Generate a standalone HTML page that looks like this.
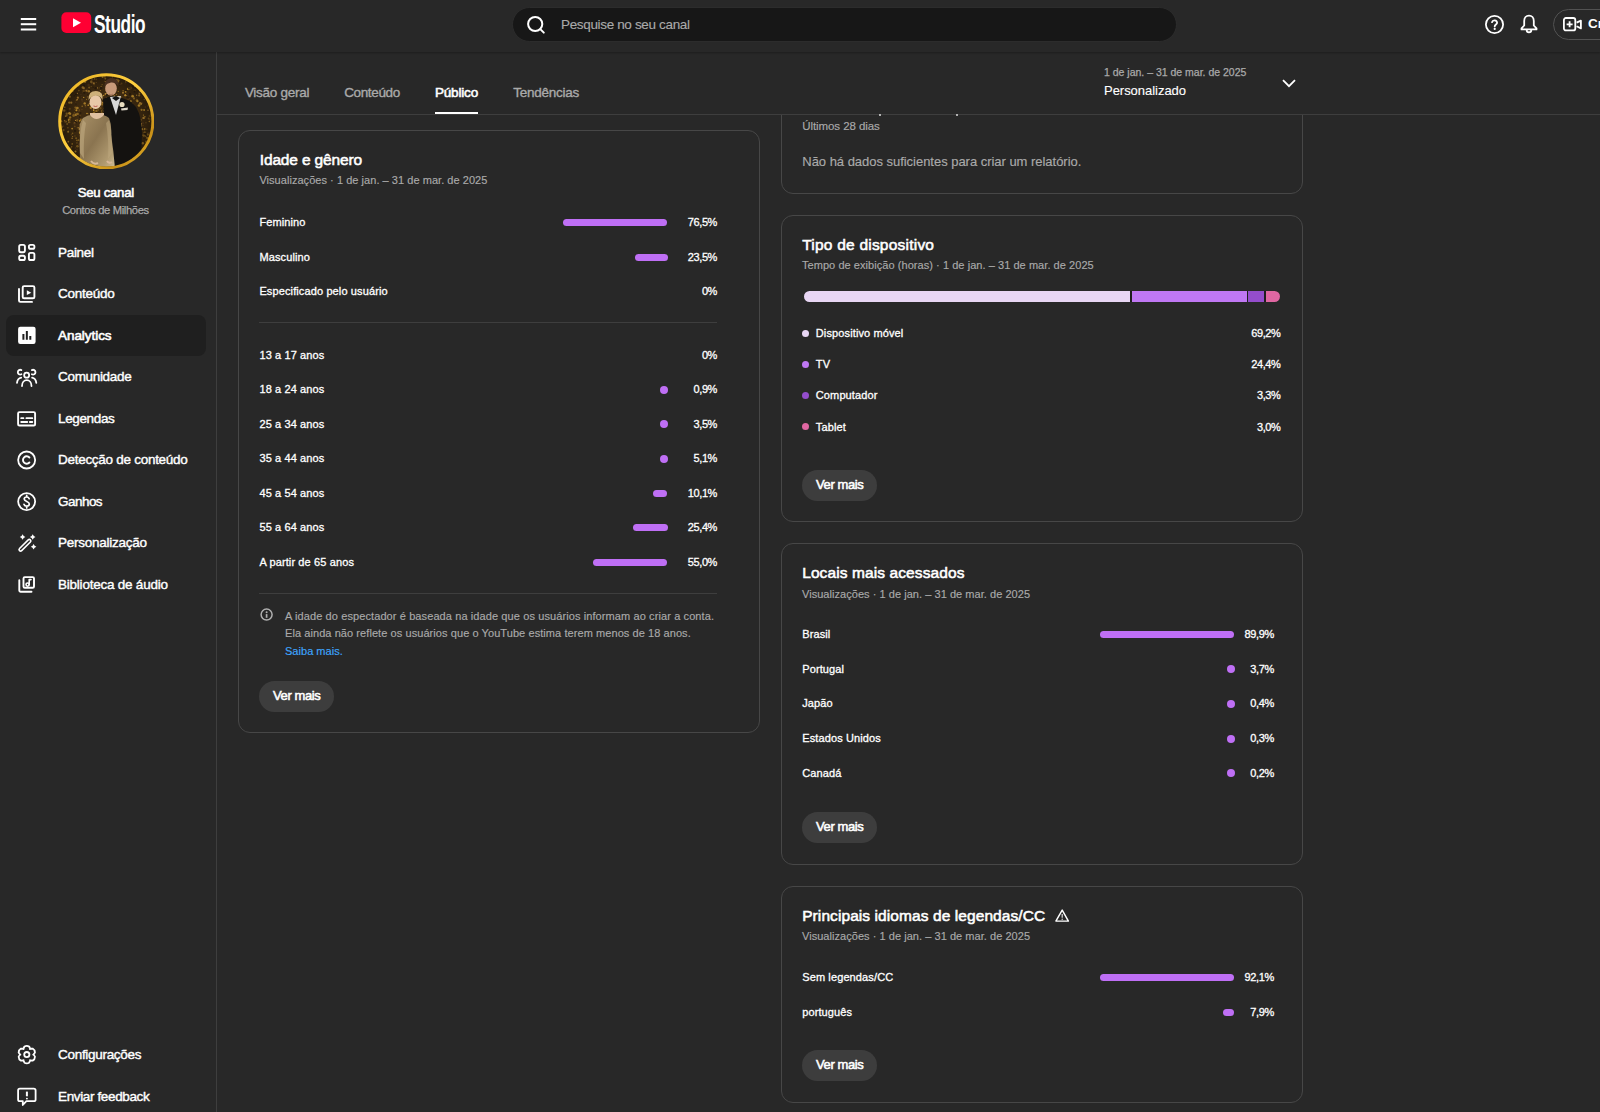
<!DOCTYPE html>
<html><head><meta charset="utf-8"><title>YouTube Studio</title><style>
*{margin:0;padding:0;box-sizing:border-box}
html,body{width:1600px;height:1112px;overflow:hidden;background:#282828;font-family:"Liberation Sans",sans-serif;color:#fff;position:relative}
.t{position:absolute;white-space:nowrap}
.r{position:absolute}
#hdr{position:absolute;left:0;top:0;width:1600px;height:52px;background:#282828;box-shadow:0 1px 2px rgba(0,0,0,.28);z-index:5}
#side{position:absolute;left:0;top:52px;width:217px;height:1060px;border-right:1px solid #3e3e3e;background:#282828}
#tabs{position:absolute;left:217px;top:52px;width:1383px;height:63px;background:#282828;border-bottom:1px solid #3e3e3e;z-index:3}
.card{position:absolute;border:1px solid #474747;border-radius:12px}
</style></head><body>
<div id="hdr"></div>
<svg class="r" style="left:20px;top:17px;z-index:6" width="17" height="14" viewBox="0 0 17 14"><rect x="0.8" y="1" width="15.4" height="2" fill="#fff"/><rect x="0.8" y="6.2" width="15.4" height="2" fill="#fff"/><rect x="0.8" y="11.5" width="15.4" height="2" fill="#fff"/></svg>
<svg class="r" style="left:61px;top:12px;z-index:6" width="31" height="22" viewBox="0 0 31 22"><rect x="0.4" y="0.3" width="29.8" height="20.6" rx="5" fill="#ff0033"/><path d="M12 6.3 L20 10.8 L12 15.3 Z" fill="#fff"/></svg>
<div class="t" style="left:93.5px;top:12px;font-size:25px;line-height:25px;font-weight:bold;transform:scaleX(.69);transform-origin:0 0;letter-spacing:-0.6px;z-index:6">Studio</div>
<div class="r" style="left:511.50px;top:6.50px;width:665.00px;height:35.70px;background:#171717;border-radius:18px;z-index:6;border:1px solid #2c2c2c"></div>
<svg class="r" style="left:525px;top:13.5px;z-index:6" width="22" height="22" viewBox="0 0 22 22"><circle cx="10.2" cy="10" r="7.1" fill="none" stroke="#fff" stroke-width="2"/><path d="M15.3 15.1 L18.8 18.6" stroke="#fff" stroke-width="2" stroke-linecap="round"/></svg>
<div class="t" style="top:17.80px;font-size:13.5px;line-height:13.5px;color:#aaaaaa;letter-spacing:-0.342px;-webkit-text-stroke:0.12px #aaaaaa;left:561.00px;z-index:6">Pesquise no seu canal</div>
<svg class="r" style="left:1484px;top:14px;z-index:6" width="21" height="21" viewBox="0 0 21 21"><circle cx="10.5" cy="10.5" r="8.6" fill="none" stroke="#fff" stroke-width="1.8"/><path d="M8 8.2a2.6 2.6 0 0 1 5.1.5c0 1.7-2.4 2-2.4 3.7" fill="none" stroke="#fff" stroke-width="1.8" stroke-linecap="round"/><circle cx="10.7" cy="14.9" r="1.1" fill="#fff"/></svg>
<svg class="r" style="left:1519px;top:14px;z-index:6" width="20" height="21" viewBox="0 0 20 21"><path d="M10 1.6c-2.9 0-4.8 2.3-4.8 5.3v4.6l-2.7 2.9v1h15v-1l-2.7-2.9V6.9c0-3-1.9-5.3-4.8-5.3z" fill="none" stroke="#fff" stroke-width="1.8" stroke-linejoin="round"/><path d="M7.7 16a2.3 2.3 0 0 0 4.6 0" fill="none" stroke="#fff" stroke-width="1.8"/></svg>
<div class="r" style="left:1553px;top:9px;width:100px;height:31px;border-radius:16px;border:1px solid #525252;z-index:6"></div>
<svg class="r" style="left:1562px;top:15px;z-index:6" width="22" height="18" viewBox="0 0 22 18"><rect x="1.9" y="3" width="11.4" height="12.4" rx="2" fill="none" stroke="#fff" stroke-width="1.8"/><path d="M7.6 6.3v6M4.6 9.3h6" stroke="#fff" stroke-width="1.8"/><path d="M14.6 7.6L18.9 5.6v7.8l-4.3-2.1" fill="none" stroke="#fff" stroke-width="1.8" stroke-linejoin="round"/></svg>
<div class="t" style="top:17.20px;font-size:13.5px;line-height:13.5px;color:#fff;letter-spacing:0.000px;font-weight:bold;left:1588.00px;z-index:6">Criar</div>
<div id="side"></div>
<svg class="r" style="left:58px;top:73px" width="96" height="96" viewBox="0 0 96 96">
<defs>
<linearGradient id="ring" x1="0" y1="0" x2="1" y2="1"><stop offset="0" stop-color="#e8b020"/><stop offset="0.45" stop-color="#ffd040"/><stop offset="0.8" stop-color="#c89018"/><stop offset="1" stop-color="#f0c030"/></linearGradient>
<linearGradient id="dress" x1="0" y1="0" x2="1" y2="1"><stop offset="0" stop-color="#a89066"/><stop offset="0.45" stop-color="#8a7450"/><stop offset="0.8" stop-color="#b09a70"/><stop offset="1" stop-color="#d0c09a"/></linearGradient>
<radialGradient id="vig" cx="50%" cy="50%" r="50%"><stop offset="0.6" stop-color="#000" stop-opacity="0"/><stop offset="1" stop-color="#000" stop-opacity=".4"/></radialGradient>
<clipPath id="cc"><circle cx="48.3" cy="48.3" r="45.5"/></clipPath>
</defs>
<g clip-path="url(#cc)">
<rect x="0" y="0" width="96" height="96" fill="#3e2a10"/>
<circle cx="31.1" cy="14.5" r="1.0" fill="#8a6420"/><circle cx="78.8" cy="9.0" r="1.0" fill="#54381a"/><circle cx="20.6" cy="8.3" r="0.8" fill="#a67a28"/><circle cx="8.7" cy="40.8" r="1.2" fill="#8a6420"/><circle cx="91.0" cy="60.5" r="1.0" fill="#8a6420"/><circle cx="55.4" cy="38.1" r="1.3" fill="#8a6420"/><circle cx="53.4" cy="12.8" r="0.8" fill="#54381a"/><circle cx="11.3" cy="29.6" r="1.2" fill="#a67a28"/><circle cx="9.9" cy="54.8" r="0.7" fill="#8a6420"/><circle cx="52.6" cy="6.0" r="0.5" fill="#a67a28"/><circle cx="47.7" cy="51.0" r="1.1" fill="#c0902c"/><circle cx="56.2" cy="43.5" r="0.7" fill="#b08030"/><circle cx="17.3" cy="74.9" r="0.6" fill="#6a4a18"/><circle cx="50.4" cy="84.0" r="1.1" fill="#6a4a18"/><circle cx="58.5" cy="7.0" r="0.9" fill="#a67a28"/><circle cx="72.7" cy="14.6" r="0.9" fill="#8a6420"/><circle cx="92.4" cy="7.5" r="0.9" fill="#b08030"/><circle cx="84.0" cy="30.1" r="1.1" fill="#54381a"/><circle cx="47.7" cy="76.5" r="0.6" fill="#8a6420"/><circle cx="90.7" cy="45.5" r="1.0" fill="#8a6420"/><circle cx="70.2" cy="29.7" r="1.0" fill="#2a1c0c"/><circle cx="78.9" cy="27.3" r="0.8" fill="#2a1c0c"/><circle cx="33.3" cy="90.3" r="0.8" fill="#54381a"/><circle cx="11.2" cy="5.7" r="1.1" fill="#a67a28"/><circle cx="70.9" cy="38.2" r="1.2" fill="#c0902c"/><circle cx="7.7" cy="43.1" r="0.9" fill="#a67a28"/><circle cx="78.7" cy="82.9" r="0.7" fill="#c0902c"/><circle cx="94.7" cy="65.5" r="0.8" fill="#a67a28"/><circle cx="14.5" cy="16.9" r="0.7" fill="#a67a28"/><circle cx="1.2" cy="79.8" r="0.6" fill="#6a4a18"/><circle cx="0.4" cy="40.2" r="0.8" fill="#54381a"/><circle cx="30.6" cy="12.0" r="1.2" fill="#54381a"/><circle cx="62.9" cy="71.0" r="0.9" fill="#b08030"/><circle cx="74.9" cy="84.0" r="1.1" fill="#c0902c"/><circle cx="38.2" cy="37.8" r="0.9" fill="#c0902c"/><circle cx="6.0" cy="6.5" r="0.7" fill="#a67a28"/><circle cx="10.6" cy="57.7" r="0.6" fill="#54381a"/><circle cx="14.5" cy="9.7" r="0.8" fill="#8a6420"/><circle cx="6.8" cy="20.0" r="0.8" fill="#2a1c0c"/><circle cx="24.2" cy="33.3" r="0.8" fill="#8a6420"/><circle cx="11.1" cy="46.9" r="1.3" fill="#c0902c"/><circle cx="46.4" cy="8.2" r="0.6" fill="#6a4a18"/><circle cx="71.1" cy="45.9" r="1.1" fill="#54381a"/><circle cx="2.2" cy="91.3" r="0.9" fill="#a67a28"/><circle cx="66.2" cy="87.8" r="1.1" fill="#6a4a18"/><circle cx="93.9" cy="82.9" r="1.1" fill="#6a4a18"/><circle cx="49.8" cy="87.2" r="0.8" fill="#a67a28"/><circle cx="51.1" cy="74.8" r="0.8" fill="#a67a28"/><circle cx="58.9" cy="75.7" r="1.1" fill="#a67a28"/><circle cx="77.4" cy="78.6" r="1.1" fill="#a67a28"/><circle cx="19.2" cy="47.3" r="1.1" fill="#8a6420"/><circle cx="75.9" cy="45.3" r="0.7" fill="#54381a"/><circle cx="91.8" cy="42.9" r="1.2" fill="#6a4a18"/><circle cx="91.7" cy="35.0" r="0.7" fill="#a67a28"/><circle cx="45.1" cy="32.4" r="0.9" fill="#54381a"/><circle cx="80.7" cy="46.0" r="1.0" fill="#b08030"/><circle cx="61.7" cy="80.1" r="0.6" fill="#c0902c"/><circle cx="75.1" cy="72.0" r="0.9" fill="#a67a28"/><circle cx="41.7" cy="61.0" r="0.6" fill="#2a1c0c"/><circle cx="38.0" cy="38.5" r="1.3" fill="#2a1c0c"/><circle cx="15.3" cy="95.3" r="0.5" fill="#54381a"/><circle cx="86.9" cy="77.4" r="0.6" fill="#b08030"/><circle cx="57.2" cy="45.5" r="1.2" fill="#a67a28"/><circle cx="52.7" cy="12.6" r="0.5" fill="#2a1c0c"/><circle cx="62.4" cy="50.6" r="1.2" fill="#c0902c"/><circle cx="94.7" cy="18.7" r="1.2" fill="#8a6420"/><circle cx="24.2" cy="28.1" r="0.7" fill="#54381a"/><circle cx="31.3" cy="52.3" r="1.2" fill="#8a6420"/><circle cx="87.4" cy="34.0" r="0.9" fill="#54381a"/><circle cx="78.2" cy="49.6" r="1.2" fill="#54381a"/><circle cx="12.6" cy="14.6" r="0.9" fill="#b08030"/><circle cx="42.3" cy="17.6" r="0.5" fill="#b08030"/><circle cx="14.4" cy="13.6" r="1.0" fill="#8a6420"/><circle cx="53.4" cy="31.3" r="0.9" fill="#54381a"/><circle cx="46.3" cy="74.5" r="1.2" fill="#8a6420"/><circle cx="23.9" cy="26.6" r="1.1" fill="#54381a"/><circle cx="43.4" cy="2.7" r="1.2" fill="#8a6420"/><circle cx="42.6" cy="58.8" r="0.9" fill="#54381a"/><circle cx="19.1" cy="26.6" r="0.9" fill="#b08030"/><circle cx="45.9" cy="90.4" r="1.1" fill="#6a4a18"/><circle cx="88.6" cy="85.7" r="0.7" fill="#c0902c"/><circle cx="13.2" cy="11.7" r="0.9" fill="#8a6420"/><circle cx="64.4" cy="41.1" r="0.7" fill="#6a4a18"/><circle cx="75.3" cy="86.1" r="0.6" fill="#2a1c0c"/><circle cx="61.8" cy="35.2" r="0.7" fill="#a67a28"/><circle cx="92.9" cy="21.1" r="1.3" fill="#c0902c"/><circle cx="85.0" cy="15.6" r="1.0" fill="#a67a28"/><circle cx="15.5" cy="41.4" r="0.9" fill="#6a4a18"/><circle cx="40.4" cy="34.2" r="0.6" fill="#6a4a18"/><circle cx="1.9" cy="53.2" r="0.9" fill="#8a6420"/><circle cx="36.9" cy="49.7" r="0.7" fill="#8a6420"/><circle cx="10.8" cy="88.2" r="0.7" fill="#8a6420"/><circle cx="8.1" cy="26.1" r="1.2" fill="#a67a28"/><circle cx="26.0" cy="12.4" r="0.8" fill="#2a1c0c"/><circle cx="78.6" cy="24.8" r="0.6" fill="#54381a"/><circle cx="54.8" cy="67.2" r="0.6" fill="#8a6420"/><circle cx="76.8" cy="17.6" r="1.2" fill="#6a4a18"/><circle cx="90.1" cy="60.9" r="1.1" fill="#8a6420"/><circle cx="58.4" cy="21.4" r="0.7" fill="#8a6420"/><circle cx="43.6" cy="32.6" r="0.9" fill="#6a4a18"/><circle cx="59.7" cy="4.1" r="1.1" fill="#8a6420"/><circle cx="93.0" cy="25.1" r="0.6" fill="#6a4a18"/><circle cx="60.4" cy="51.0" r="0.7" fill="#c0902c"/><circle cx="48.0" cy="17.1" r="0.8" fill="#8a6420"/><circle cx="95.5" cy="3.5" r="0.5" fill="#54381a"/><circle cx="52.9" cy="18.2" r="0.9" fill="#c0902c"/><circle cx="10.2" cy="78.6" r="0.8" fill="#c0902c"/><circle cx="52.4" cy="85.3" r="1.3" fill="#6a4a18"/><circle cx="66.0" cy="94.3" r="0.8" fill="#b08030"/><circle cx="84.7" cy="70.0" r="0.6" fill="#6a4a18"/><circle cx="94.3" cy="80.4" r="0.5" fill="#2a1c0c"/><circle cx="71.1" cy="24.5" r="0.6" fill="#8a6420"/><circle cx="63.9" cy="36.6" r="0.9" fill="#6a4a18"/><circle cx="57.5" cy="66.5" r="0.5" fill="#a67a28"/><circle cx="15.1" cy="42.8" r="0.7" fill="#6a4a18"/><circle cx="93.4" cy="52.5" r="0.7" fill="#6a4a18"/><circle cx="20.9" cy="17.6" r="0.8" fill="#8a6420"/><circle cx="45.6" cy="48.3" r="0.7" fill="#54381a"/><circle cx="74.5" cy="8.7" r="1.2" fill="#a67a28"/><circle cx="38.4" cy="4.0" r="0.5" fill="#6a4a18"/><circle cx="60.4" cy="8.1" r="1.3" fill="#b08030"/><circle cx="72.1" cy="63.1" r="1.1" fill="#54381a"/><circle cx="37.4" cy="31.3" r="1.3" fill="#a67a28"/><circle cx="27.3" cy="59.4" r="0.6" fill="#b08030"/><circle cx="80.2" cy="85.6" r="1.0" fill="#2a1c0c"/><circle cx="67.3" cy="48.5" r="1.2" fill="#b08030"/><circle cx="48.4" cy="80.2" r="1.1" fill="#b08030"/><circle cx="65.9" cy="76.6" r="1.1" fill="#2a1c0c"/><circle cx="61.7" cy="8.2" r="0.5" fill="#2a1c0c"/><circle cx="34.6" cy="10.1" r="1.2" fill="#54381a"/><circle cx="4.9" cy="1.8" r="0.9" fill="#a67a28"/><circle cx="47.0" cy="0.3" r="1.1" fill="#2a1c0c"/><circle cx="89.5" cy="86.2" r="0.6" fill="#54381a"/><circle cx="6.3" cy="70.7" r="0.7" fill="#8a6420"/><circle cx="81.2" cy="22.5" r="1.1" fill="#a67a28"/><circle cx="71.0" cy="93.7" r="0.9" fill="#c0902c"/><circle cx="7.4" cy="87.4" r="0.7" fill="#8a6420"/><circle cx="59.2" cy="61.7" r="0.6" fill="#a67a28"/><circle cx="31.9" cy="62.5" r="1.1" fill="#54381a"/><circle cx="54.5" cy="1.2" r="0.5" fill="#6a4a18"/><circle cx="93.4" cy="9.6" r="0.7" fill="#c0902c"/><circle cx="27.9" cy="49.6" r="0.9" fill="#c0902c"/><circle cx="73.6" cy="95.4" r="0.9" fill="#6a4a18"/><circle cx="93.9" cy="89.9" r="0.5" fill="#c0902c"/><circle cx="7.3" cy="48.6" r="1.3" fill="#6a4a18"/><circle cx="37.1" cy="88.0" r="1.2" fill="#8a6420"/><circle cx="55.8" cy="13.6" r="0.9" fill="#6a4a18"/><circle cx="12.7" cy="78.7" r="0.9" fill="#8a6420"/><circle cx="67.5" cy="22.2" r="1.2" fill="#c0902c"/><circle cx="37.8" cy="15.3" r="1.3" fill="#2a1c0c"/><circle cx="43.3" cy="29.0" r="0.6" fill="#6a4a18"/><circle cx="36.1" cy="11.6" r="0.8" fill="#6a4a18"/><circle cx="72.1" cy="80.6" r="0.6" fill="#a67a28"/><circle cx="68.5" cy="86.6" r="0.7" fill="#6a4a18"/><circle cx="6.2" cy="37.5" r="1.2" fill="#8a6420"/><circle cx="34.6" cy="41.1" r="0.7" fill="#8a6420"/><circle cx="26.9" cy="5.0" r="1.0" fill="#2a1c0c"/><circle cx="89.8" cy="23.9" r="0.7" fill="#54381a"/><circle cx="30.3" cy="74.2" r="1.1" fill="#c0902c"/><circle cx="84.9" cy="77.9" r="1.0" fill="#54381a"/><circle cx="52.7" cy="69.1" r="0.5" fill="#2a1c0c"/><circle cx="39.4" cy="59.0" r="0.6" fill="#b08030"/><circle cx="27.5" cy="4.7" r="1.2" fill="#a67a28"/><circle cx="16.4" cy="39.8" r="0.7" fill="#6a4a18"/><circle cx="70.9" cy="93.7" r="0.7" fill="#2a1c0c"/><circle cx="22.9" cy="46.4" r="1.0" fill="#8a6420"/><circle cx="16.1" cy="15.5" r="0.7" fill="#b08030"/><circle cx="47.7" cy="21.1" r="1.2" fill="#b08030"/><circle cx="43.2" cy="13.4" r="0.7" fill="#8a6420"/><circle cx="16.8" cy="53.4" r="0.8" fill="#6a4a18"/><circle cx="24.8" cy="54.7" r="1.2" fill="#2a1c0c"/><circle cx="83.6" cy="36.8" r="1.1" fill="#a67a28"/><circle cx="36.2" cy="32.5" r="0.5" fill="#6a4a18"/><circle cx="55.1" cy="34.6" r="1.0" fill="#54381a"/><circle cx="60.4" cy="82.8" r="0.7" fill="#6a4a18"/><circle cx="86.1" cy="36.9" r="1.0" fill="#c0902c"/><circle cx="91.6" cy="81.5" r="1.2" fill="#8a6420"/><circle cx="12.2" cy="40.8" r="1.1" fill="#b08030"/><circle cx="45.4" cy="56.4" r="0.5" fill="#c0902c"/><circle cx="89.3" cy="89.1" r="0.9" fill="#c0902c"/><circle cx="93.3" cy="23.9" r="0.6" fill="#a67a28"/><circle cx="14.6" cy="93.3" r="0.6" fill="#b08030"/><circle cx="69.3" cy="62.1" r="1.1" fill="#c0902c"/><circle cx="8.2" cy="74.6" r="0.5" fill="#a67a28"/><circle cx="22.3" cy="88.3" r="1.0" fill="#6a4a18"/><circle cx="92.4" cy="60.1" r="0.9" fill="#c0902c"/><circle cx="67.1" cy="10.8" r="0.6" fill="#54381a"/><circle cx="90.6" cy="18.4" r="0.7" fill="#b08030"/><circle cx="57.7" cy="1.0" r="0.7" fill="#c0902c"/><circle cx="26.7" cy="30.4" r="1.2" fill="#a67a28"/><circle cx="45.6" cy="22.5" r="0.7" fill="#c0902c"/><circle cx="67.6" cy="29.5" r="0.5" fill="#c0902c"/><circle cx="84.9" cy="62.1" r="0.6" fill="#a67a28"/><circle cx="64.1" cy="88.8" r="0.7" fill="#8a6420"/><circle cx="66.8" cy="69.0" r="0.8" fill="#c0902c"/><circle cx="19.0" cy="76.5" r="1.1" fill="#54381a"/><circle cx="6.5" cy="47.6" r="0.7" fill="#b08030"/><circle cx="78.7" cy="22.2" r="0.7" fill="#b08030"/><circle cx="85.4" cy="10.5" r="1.0" fill="#54381a"/><circle cx="18.0" cy="21.4" r="0.8" fill="#2a1c0c"/><circle cx="5.4" cy="57.1" r="1.2" fill="#8a6420"/><circle cx="20.4" cy="93.5" r="0.6" fill="#8a6420"/><circle cx="68.1" cy="17.7" r="0.9" fill="#2a1c0c"/><circle cx="84.8" cy="70.3" r="1.3" fill="#a67a28"/><circle cx="31.6" cy="17.8" r="1.2" fill="#2a1c0c"/><circle cx="44.9" cy="29.9" r="1.1" fill="#b08030"/><circle cx="35.9" cy="31.8" r="0.6" fill="#8a6420"/><circle cx="7.5" cy="7.8" r="0.8" fill="#8a6420"/><circle cx="53.9" cy="72.8" r="0.8" fill="#b08030"/><circle cx="78.9" cy="78.9" r="0.8" fill="#8a6420"/><circle cx="67.7" cy="18.8" r="0.9" fill="#c0902c"/><circle cx="18.5" cy="35.0" r="1.2" fill="#8a6420"/><circle cx="60.6" cy="23.8" r="1.0" fill="#c0902c"/><circle cx="3.9" cy="3.3" r="0.6" fill="#8a6420"/><circle cx="24.7" cy="71.7" r="1.2" fill="#6a4a18"/><circle cx="34.8" cy="32.2" r="1.3" fill="#8a6420"/><circle cx="25.2" cy="68.8" r="0.8" fill="#6a4a18"/><circle cx="28.6" cy="69.3" r="1.0" fill="#b08030"/><circle cx="60.9" cy="90.6" r="0.5" fill="#a67a28"/><circle cx="10.3" cy="68.7" r="0.9" fill="#b08030"/><circle cx="37.1" cy="24.1" r="0.8" fill="#c0902c"/><circle cx="12.7" cy="47.7" r="0.5" fill="#2a1c0c"/><circle cx="29.1" cy="66.4" r="0.6" fill="#a67a28"/><circle cx="31.5" cy="30.7" r="0.8" fill="#b08030"/><circle cx="57.2" cy="49.1" r="0.8" fill="#a67a28"/><circle cx="23.7" cy="6.2" r="0.5" fill="#54381a"/><circle cx="52.3" cy="15.4" r="0.8" fill="#8a6420"/><circle cx="94.8" cy="25.4" r="0.6" fill="#8a6420"/><circle cx="40.4" cy="94.9" r="1.3" fill="#a67a28"/><circle cx="22.5" cy="40.0" r="1.0" fill="#2a1c0c"/><circle cx="22.6" cy="51.7" r="1.1" fill="#b08030"/><circle cx="11.6" cy="80.7" r="0.7" fill="#54381a"/><circle cx="25.7" cy="24.4" r="0.7" fill="#c0902c"/><circle cx="23.8" cy="23.6" r="0.6" fill="#54381a"/><circle cx="18.1" cy="6.2" r="0.7" fill="#a67a28"/><circle cx="48.7" cy="22.2" r="1.1" fill="#2a1c0c"/><circle cx="44.5" cy="3.6" r="0.5" fill="#b08030"/><circle cx="22.2" cy="43.0" r="0.8" fill="#6a4a18"/><circle cx="22.4" cy="4.8" r="1.0" fill="#b08030"/><circle cx="56.0" cy="89.3" r="0.8" fill="#b08030"/><circle cx="17.1" cy="57.9" r="1.1" fill="#2a1c0c"/><circle cx="90.8" cy="10.2" r="1.0" fill="#54381a"/><circle cx="33.6" cy="3.6" r="0.8" fill="#8a6420"/><circle cx="19.6" cy="24.5" r="1.0" fill="#2a1c0c"/><circle cx="87.7" cy="78.2" r="1.2" fill="#c0902c"/><circle cx="65.1" cy="17.8" r="0.7" fill="#a67a28"/><circle cx="3.0" cy="47.6" r="0.9" fill="#c0902c"/><circle cx="9.7" cy="37.9" r="0.9" fill="#2a1c0c"/><circle cx="51.3" cy="62.7" r="0.8" fill="#6a4a18"/><circle cx="39.3" cy="27.2" r="0.7" fill="#8a6420"/><circle cx="30.0" cy="54.4" r="0.8" fill="#c0902c"/><circle cx="1.7" cy="73.6" r="1.1" fill="#2a1c0c"/><circle cx="18.9" cy="69.9" r="0.7" fill="#8a6420"/><circle cx="41.7" cy="15.0" r="0.6" fill="#8a6420"/><circle cx="39.0" cy="84.8" r="0.9" fill="#a67a28"/><circle cx="12.5" cy="5.0" r="0.6" fill="#b08030"/><circle cx="87.3" cy="8.5" r="1.0" fill="#6a4a18"/><circle cx="70.8" cy="16.5" r="0.8" fill="#a67a28"/><circle cx="50.0" cy="88.8" r="0.6" fill="#c0902c"/><circle cx="72.3" cy="76.0" r="1.1" fill="#6a4a18"/><circle cx="12.2" cy="90.5" r="1.3" fill="#c0902c"/><circle cx="30.2" cy="58.3" r="1.0" fill="#8a6420"/><circle cx="86.8" cy="59.6" r="1.2" fill="#a67a28"/><circle cx="61.5" cy="82.2" r="1.0" fill="#54381a"/><circle cx="81.2" cy="79.6" r="0.6" fill="#a67a28"/><circle cx="4.0" cy="90.1" r="0.6" fill="#6a4a18"/><circle cx="11.8" cy="23.7" r="1.1" fill="#a67a28"/><circle cx="3.9" cy="54.0" r="1.1" fill="#8a6420"/><circle cx="64.1" cy="31.1" r="0.8" fill="#c0902c"/><circle cx="52.8" cy="60.2" r="0.7" fill="#c0902c"/><circle cx="29.6" cy="23.9" r="0.8" fill="#6a4a18"/><circle cx="42.9" cy="42.1" r="0.5" fill="#54381a"/><circle cx="94.7" cy="44.7" r="0.9" fill="#54381a"/><circle cx="74.9" cy="44.0" r="0.6" fill="#c0902c"/><circle cx="38.4" cy="6.4" r="0.8" fill="#6a4a18"/><circle cx="8.8" cy="42.4" r="0.9" fill="#8a6420"/><circle cx="3.9" cy="12.5" r="1.2" fill="#6a4a18"/><circle cx="74.7" cy="49.1" r="0.5" fill="#54381a"/><circle cx="85.9" cy="62.7" r="1.1" fill="#8a6420"/><circle cx="82.3" cy="95.6" r="1.1" fill="#b08030"/><circle cx="10.5" cy="12.6" r="1.2" fill="#6a4a18"/><circle cx="91.8" cy="87.9" r="0.6" fill="#b08030"/><circle cx="69.2" cy="21.2" r="1.2" fill="#54381a"/><circle cx="72.6" cy="15.2" r="1.2" fill="#6a4a18"/><circle cx="86.9" cy="43.8" r="0.7" fill="#c0902c"/><circle cx="20.0" cy="25.2" r="0.9" fill="#6a4a18"/><circle cx="35.7" cy="19.1" r="0.8" fill="#2a1c0c"/><circle cx="89.9" cy="65.2" r="1.2" fill="#a67a28"/><circle cx="76.0" cy="25.4" r="1.1" fill="#8a6420"/><circle cx="61.1" cy="34.5" r="1.2" fill="#54381a"/><circle cx="50.1" cy="66.1" r="1.2" fill="#6a4a18"/><circle cx="95.3" cy="60.5" r="0.8" fill="#b08030"/><circle cx="35.7" cy="36.1" r="0.8" fill="#a67a28"/><circle cx="34.6" cy="73.4" r="0.9" fill="#a67a28"/><circle cx="59.1" cy="92.0" r="0.7" fill="#54381a"/><circle cx="24.4" cy="61.4" r="1.3" fill="#54381a"/><circle cx="89.1" cy="86.0" r="1.1" fill="#2a1c0c"/><circle cx="3.2" cy="14.3" r="1.0" fill="#c0902c"/><circle cx="40.1" cy="35.0" r="0.5" fill="#c0902c"/><circle cx="21.8" cy="62.7" r="0.5" fill="#8a6420"/><circle cx="54.4" cy="29.2" r="0.9" fill="#54381a"/><circle cx="21.5" cy="56.0" r="1.0" fill="#a67a28"/><circle cx="35.2" cy="79.5" r="0.6" fill="#8a6420"/><circle cx="89.9" cy="23.4" r="0.6" fill="#8a6420"/><circle cx="6.1" cy="13.9" r="1.0" fill="#6a4a18"/><circle cx="38.6" cy="25.4" r="0.5" fill="#2a1c0c"/><circle cx="78.8" cy="85.7" r="1.0" fill="#54381a"/><circle cx="42.6" cy="90.0" r="1.1" fill="#a67a28"/><circle cx="15.8" cy="0.0" r="0.5" fill="#8a6420"/><circle cx="39.0" cy="22.8" r="0.5" fill="#b08030"/><circle cx="10.1" cy="58.8" r="1.0" fill="#a67a28"/><circle cx="13.7" cy="19.2" r="1.0" fill="#54381a"/><circle cx="62.2" cy="39.9" r="1.0" fill="#54381a"/><circle cx="29.7" cy="28.8" r="0.5" fill="#2a1c0c"/><circle cx="75.2" cy="68.7" r="0.5" fill="#b08030"/><circle cx="41.9" cy="87.6" r="0.6" fill="#2a1c0c"/><circle cx="43.4" cy="21.7" r="0.6" fill="#a67a28"/><circle cx="61.8" cy="11.8" r="1.2" fill="#2a1c0c"/><circle cx="90.5" cy="25.3" r="0.5" fill="#2a1c0c"/><circle cx="53.2" cy="41.9" r="1.1" fill="#54381a"/><circle cx="93.3" cy="28.4" r="1.2" fill="#a67a28"/><circle cx="8.2" cy="48.7" r="0.6" fill="#a67a28"/><circle cx="80.8" cy="19.5" r="0.6" fill="#6a4a18"/><circle cx="18.4" cy="37.3" r="1.0" fill="#c0902c"/><circle cx="87.1" cy="60.5" r="1.1" fill="#2a1c0c"/><circle cx="80.8" cy="51.5" r="0.9" fill="#54381a"/><circle cx="67.0" cy="82.3" r="0.8" fill="#2a1c0c"/><circle cx="22.4" cy="84.9" r="1.1" fill="#c0902c"/><circle cx="59.8" cy="7.5" r="1.2" fill="#a67a28"/><circle cx="3.2" cy="10.7" r="1.0" fill="#a67a28"/><circle cx="33.1" cy="13.6" r="0.5" fill="#8a6420"/><circle cx="13.3" cy="61.8" r="0.5" fill="#8a6420"/><circle cx="70.7" cy="6.3" r="1.0" fill="#6a4a18"/><circle cx="19.1" cy="91.6" r="0.9" fill="#2a1c0c"/><circle cx="6.3" cy="83.3" r="1.2" fill="#c0902c"/><circle cx="10.3" cy="19.7" r="0.6" fill="#8a6420"/><circle cx="91.1" cy="87.5" r="1.1" fill="#8a6420"/><circle cx="79.2" cy="60.6" r="0.7" fill="#8a6420"/><circle cx="12.7" cy="76.0" r="1.0" fill="#6a4a18"/><circle cx="30.6" cy="40.7" r="0.5" fill="#6a4a18"/><circle cx="89.3" cy="4.6" r="1.1" fill="#6a4a18"/><circle cx="73.8" cy="57.8" r="0.9" fill="#6a4a18"/><circle cx="59.4" cy="3.0" r="0.8" fill="#c0902c"/><circle cx="49.8" cy="9.4" r="0.9" fill="#8a6420"/><circle cx="51.6" cy="20.8" r="1.2" fill="#8a6420"/><circle cx="55.2" cy="27.6" r="0.8" fill="#54381a"/><circle cx="19.4" cy="73.2" r="1.3" fill="#8a6420"/><circle cx="33.4" cy="9.2" r="1.1" fill="#b08030"/><circle cx="17.7" cy="47.5" r="0.8" fill="#b08030"/><circle cx="49.5" cy="55.5" r="0.6" fill="#b08030"/><circle cx="20.6" cy="67.1" r="0.9" fill="#8a6420"/><circle cx="90.1" cy="73.6" r="0.9" fill="#2a1c0c"/><circle cx="53.9" cy="10.0" r="0.8" fill="#8a6420"/><circle cx="38.5" cy="37.9" r="1.2" fill="#8a6420"/><circle cx="40.5" cy="62.0" r="0.8" fill="#6a4a18"/><circle cx="25.3" cy="86.5" r="0.9" fill="#c0902c"/><circle cx="94.3" cy="60.6" r="1.3" fill="#a67a28"/><circle cx="51.0" cy="72.4" r="1.1" fill="#2a1c0c"/><circle cx="3.3" cy="55.8" r="0.9" fill="#b08030"/><circle cx="80.9" cy="63.6" r="1.1" fill="#a67a28"/><circle cx="44.5" cy="66.1" r="0.7" fill="#a67a28"/><circle cx="12.1" cy="44.4" r="1.2" fill="#a67a28"/><circle cx="48.7" cy="25.7" r="1.1" fill="#b08030"/><circle cx="81.0" cy="14.8" r="0.6" fill="#a67a28"/><circle cx="69.4" cy="57.9" r="0.8" fill="#a67a28"/><circle cx="31.5" cy="18.2" r="1.3" fill="#2a1c0c"/><circle cx="95.5" cy="15.8" r="1.0" fill="#a67a28"/><circle cx="36.9" cy="94.4" r="1.1" fill="#2a1c0c"/><circle cx="28.6" cy="26.3" r="0.6" fill="#8a6420"/><circle cx="27.0" cy="85.0" r="0.9" fill="#8a6420"/><circle cx="38.3" cy="75.9" r="1.1" fill="#54381a"/><circle cx="94.2" cy="28.4" r="0.5" fill="#6a4a18"/><circle cx="58.0" cy="38.9" r="1.1" fill="#b08030"/><circle cx="41.3" cy="55.1" r="1.1" fill="#c0902c"/><circle cx="81.2" cy="64.1" r="1.0" fill="#b08030"/><circle cx="61.6" cy="56.0" r="0.7" fill="#a67a28"/><circle cx="61.6" cy="43.6" r="0.8" fill="#2a1c0c"/><circle cx="67.3" cy="85.9" r="0.7" fill="#c0902c"/><circle cx="68.5" cy="60.4" r="0.7" fill="#c0902c"/><circle cx="46.3" cy="1.9" r="1.2" fill="#54381a"/><circle cx="64.8" cy="89.3" r="0.6" fill="#2a1c0c"/><circle cx="31.5" cy="1.0" r="1.2" fill="#8a6420"/><circle cx="3.7" cy="52.2" r="0.6" fill="#b08030"/><circle cx="91.3" cy="19.2" r="0.8" fill="#b08030"/><circle cx="55.2" cy="51.9" r="1.1" fill="#54381a"/><circle cx="1.5" cy="76.1" r="0.8" fill="#6a4a18"/><circle cx="39.4" cy="91.0" r="0.7" fill="#2a1c0c"/><circle cx="17.6" cy="49.3" r="1.2" fill="#2a1c0c"/><circle cx="94.5" cy="34.1" r="0.5" fill="#6a4a18"/><circle cx="36.7" cy="5.9" r="0.6" fill="#c0902c"/><circle cx="60.3" cy="64.8" r="1.0" fill="#8a6420"/><circle cx="21.5" cy="71.2" r="1.3" fill="#54381a"/><circle cx="93.3" cy="95.4" r="1.3" fill="#c0902c"/><circle cx="20.4" cy="12.4" r="1.1" fill="#b08030"/><circle cx="76.6" cy="18.5" r="1.0" fill="#2a1c0c"/><circle cx="21.7" cy="92.5" r="0.8" fill="#2a1c0c"/><circle cx="79.7" cy="76.3" r="0.8" fill="#6a4a18"/><circle cx="72.9" cy="62.4" r="1.1" fill="#c0902c"/><circle cx="34.1" cy="81.7" r="0.7" fill="#c0902c"/><circle cx="66.0" cy="94.4" r="1.0" fill="#c0902c"/><circle cx="0.3" cy="69.3" r="0.7" fill="#a67a28"/><circle cx="62.8" cy="30.8" r="0.9" fill="#54381a"/><circle cx="61.2" cy="63.3" r="0.8" fill="#6a4a18"/><circle cx="82.0" cy="5.5" r="1.2" fill="#6a4a18"/><circle cx="75.3" cy="13.5" r="1.2" fill="#2a1c0c"/><circle cx="55.9" cy="63.1" r="0.7" fill="#8a6420"/><circle cx="63.0" cy="24.0" r="0.6" fill="#a67a28"/><circle cx="82.0" cy="17.8" r="0.9" fill="#b08030"/><circle cx="14.7" cy="86.8" r="1.1" fill="#a67a28"/><circle cx="58.5" cy="66.1" r="1.3" fill="#8a6420"/><circle cx="64.2" cy="85.8" r="1.1" fill="#b08030"/><circle cx="28.5" cy="47.5" r="0.7" fill="#8a6420"/><circle cx="71.2" cy="42.1" r="1.2" fill="#54381a"/><circle cx="11.4" cy="40.2" r="1.2" fill="#c0902c"/><circle cx="47.3" cy="5.6" r="0.9" fill="#a67a28"/><circle cx="67.2" cy="23.7" r="0.6" fill="#54381a"/><circle cx="82.8" cy="0.6" r="1.2" fill="#c0902c"/><circle cx="66.8" cy="47.8" r="0.7" fill="#c0902c"/><circle cx="36.0" cy="40.2" r="1.3" fill="#8a6420"/><circle cx="17.3" cy="34.6" r="1.0" fill="#8a6420"/><circle cx="58.5" cy="65.5" r="1.2" fill="#6a4a18"/><circle cx="77.6" cy="9.0" r="0.9" fill="#b08030"/><circle cx="86.2" cy="3.3" r="1.1" fill="#2a1c0c"/><circle cx="12.2" cy="9.1" r="1.0" fill="#6a4a18"/><circle cx="45.6" cy="50.5" r="1.1" fill="#a67a28"/><circle cx="27.3" cy="32.8" r="0.7" fill="#8a6420"/><circle cx="79.4" cy="28.1" r="1.2" fill="#c0902c"/><circle cx="32.0" cy="94.5" r="1.2" fill="#6a4a18"/><circle cx="93.6" cy="62.8" r="1.1" fill="#6a4a18"/><circle cx="18.5" cy="68.5" r="0.6" fill="#2a1c0c"/><circle cx="8.4" cy="95.7" r="0.8" fill="#54381a"/><circle cx="85.0" cy="52.4" r="0.5" fill="#6a4a18"/><circle cx="10.4" cy="4.5" r="1.2" fill="#c0902c"/><circle cx="58.4" cy="63.2" r="1.1" fill="#54381a"/><circle cx="58.7" cy="59.2" r="1.0" fill="#2a1c0c"/><circle cx="66.2" cy="84.1" r="0.6" fill="#8a6420"/><circle cx="64.0" cy="44.0" r="1.1" fill="#8a6420"/><circle cx="63.7" cy="83.4" r="0.8" fill="#8a6420"/><circle cx="87.8" cy="62.9" r="0.8" fill="#b08030"/><circle cx="13.3" cy="29.7" r="1.1" fill="#b08030"/><circle cx="29.0" cy="40.5" r="0.8" fill="#c0902c"/><circle cx="54.4" cy="55.5" r="1.2" fill="#c0902c"/><circle cx="54.5" cy="3.8" r="0.6" fill="#b08030"/><circle cx="40.4" cy="66.8" r="0.8" fill="#8a6420"/><circle cx="1.4" cy="37.2" r="1.0" fill="#2a1c0c"/><circle cx="94.2" cy="45.6" r="0.8" fill="#8a6420"/><circle cx="8.0" cy="45.3" r="1.2" fill="#2a1c0c"/><circle cx="1.5" cy="0.5" r="1.0" fill="#8a6420"/><circle cx="94.7" cy="82.4" r="0.7" fill="#8a6420"/><circle cx="12.4" cy="1.7" r="1.1" fill="#a67a28"/><circle cx="43.3" cy="71.4" r="1.2" fill="#6a4a18"/><circle cx="74.3" cy="68.5" r="1.2" fill="#2a1c0c"/><circle cx="72.9" cy="28.1" r="0.9" fill="#c0902c"/><circle cx="44.2" cy="89.5" r="0.7" fill="#8a6420"/><circle cx="68.9" cy="1.1" r="0.5" fill="#2a1c0c"/><circle cx="65.9" cy="59.3" r="0.8" fill="#6a4a18"/><circle cx="70.0" cy="15.9" r="1.2" fill="#c0902c"/><circle cx="58.5" cy="30.4" r="1.3" fill="#2a1c0c"/><circle cx="42.1" cy="65.0" r="0.6" fill="#b08030"/><circle cx="11.2" cy="91.6" r="0.6" fill="#b08030"/><circle cx="40.1" cy="37.0" r="1.1" fill="#6a4a18"/><circle cx="75.3" cy="54.4" r="0.7" fill="#8a6420"/><circle cx="59.7" cy="62.5" r="1.1" fill="#54381a"/><circle cx="31.9" cy="58.2" r="1.3" fill="#b08030"/><circle cx="14.5" cy="79.9" r="1.0" fill="#a67a28"/><circle cx="36.2" cy="65.7" r="1.0" fill="#a67a28"/><circle cx="77.5" cy="27.2" r="0.5" fill="#6a4a18"/><circle cx="25.7" cy="15.1" r="1.2" fill="#b08030"/><circle cx="85.2" cy="4.1" r="1.2" fill="#b08030"/><circle cx="85.5" cy="95.3" r="0.6" fill="#b08030"/><circle cx="76.5" cy="52.6" r="1.1" fill="#c0902c"/><circle cx="33.3" cy="8.2" r="0.9" fill="#b08030"/><circle cx="36.6" cy="75.6" r="1.1" fill="#a67a28"/><circle cx="29.7" cy="5.5" r="0.8" fill="#2a1c0c"/><circle cx="19.8" cy="24.5" r="1.1" fill="#b08030"/><circle cx="37.0" cy="51.9" r="0.9" fill="#6a4a18"/><circle cx="74.1" cy="22.4" r="1.0" fill="#6a4a18"/><circle cx="85.0" cy="50.1" r="0.9" fill="#54381a"/><circle cx="19.4" cy="20.4" r="0.6" fill="#b08030"/><circle cx="67.3" cy="34.8" r="1.0" fill="#c0902c"/><circle cx="74.8" cy="82.3" r="0.7" fill="#c0902c"/><circle cx="35.9" cy="10.2" r="1.0" fill="#b08030"/><circle cx="7.8" cy="30.3" r="0.5" fill="#6a4a18"/><circle cx="49.9" cy="2.0" r="0.5" fill="#b08030"/><circle cx="83.1" cy="46.7" r="1.0" fill="#6a4a18"/><circle cx="88.8" cy="26.9" r="0.6" fill="#c0902c"/><circle cx="73.7" cy="78.6" r="1.3" fill="#6a4a18"/><circle cx="81.0" cy="32.5" r="1.3" fill="#c0902c"/><circle cx="8.0" cy="4.9" r="0.9" fill="#b08030"/><circle cx="67.7" cy="46.7" r="1.2" fill="#8a6420"/><circle cx="82.8" cy="61.4" r="1.2" fill="#2a1c0c"/><circle cx="92.1" cy="24.7" r="1.0" fill="#2a1c0c"/><circle cx="8.6" cy="88.4" r="0.9" fill="#a67a28"/><circle cx="43.0" cy="15.3" r="1.3" fill="#2a1c0c"/><circle cx="21.3" cy="3.7" r="0.7" fill="#6a4a18"/><circle cx="5.7" cy="53.1" r="0.5" fill="#8a6420"/><circle cx="24.8" cy="49.3" r="1.1" fill="#b08030"/><circle cx="94.6" cy="5.4" r="0.6" fill="#b08030"/><circle cx="0.6" cy="19.1" r="1.1" fill="#54381a"/><circle cx="56.8" cy="72.8" r="0.6" fill="#6a4a18"/><circle cx="35.7" cy="37.4" r="0.8" fill="#c0902c"/><circle cx="16.2" cy="22.9" r="0.6" fill="#2a1c0c"/><circle cx="85.6" cy="44.9" r="1.2" fill="#b08030"/><circle cx="3.5" cy="89.1" r="0.7" fill="#54381a"/><circle cx="83.2" cy="85.3" r="0.6" fill="#c0902c"/><circle cx="92.0" cy="88.9" r="0.8" fill="#8a6420"/><circle cx="60.3" cy="43.4" r="0.8" fill="#b08030"/><circle cx="22.5" cy="11.1" r="0.8" fill="#6a4a18"/><circle cx="21.3" cy="5.4" r="1.1" fill="#54381a"/><circle cx="85.4" cy="42.1" r="0.6" fill="#c0902c"/><circle cx="39.5" cy="14.9" r="0.7" fill="#b08030"/><circle cx="28.5" cy="77.2" r="0.7" fill="#8a6420"/><circle cx="30.5" cy="86.7" r="0.6" fill="#54381a"/><circle cx="5.5" cy="85.9" r="1.0" fill="#a67a28"/><circle cx="53.8" cy="80.2" r="0.6" fill="#b08030"/><circle cx="19.4" cy="35.0" r="1.3" fill="#a67a28"/><circle cx="88.8" cy="9.4" r="0.7" fill="#a67a28"/><circle cx="5.5" cy="69.7" r="0.7" fill="#2a1c0c"/><circle cx="1.5" cy="77.5" r="0.8" fill="#a67a28"/><circle cx="42.5" cy="75.8" r="1.3" fill="#6a4a18"/><circle cx="17.8" cy="41.8" r="1.2" fill="#a67a28"/><circle cx="26.6" cy="17.3" r="1.2" fill="#54381a"/><circle cx="74.0" cy="68.3" r="0.7" fill="#8a6420"/><circle cx="79.6" cy="85.4" r="1.1" fill="#b08030"/><circle cx="26.3" cy="19.8" r="1.0" fill="#2a1c0c"/><circle cx="60.3" cy="18.4" r="0.7" fill="#8a6420"/><circle cx="6.3" cy="70.3" r="0.8" fill="#2a1c0c"/><circle cx="88.0" cy="49.8" r="0.8" fill="#6a4a18"/><circle cx="80.8" cy="83.0" r="0.9" fill="#8a6420"/><circle cx="39.3" cy="73.2" r="0.6" fill="#2a1c0c"/><circle cx="25.6" cy="17.9" r="1.2" fill="#6a4a18"/><circle cx="3.5" cy="67.4" r="1.0" fill="#b08030"/><circle cx="0.4" cy="49.9" r="0.9" fill="#54381a"/><circle cx="6.8" cy="34.2" r="0.7" fill="#b08030"/><circle cx="83.1" cy="30.8" r="1.1" fill="#c0902c"/><circle cx="55.3" cy="86.2" r="0.7" fill="#8a6420"/><circle cx="91.6" cy="47.5" r="0.9" fill="#54381a"/><circle cx="77.2" cy="12.9" r="0.7" fill="#8a6420"/><circle cx="21.5" cy="17.5" r="0.6" fill="#6a4a18"/><circle cx="53.3" cy="91.7" r="0.5" fill="#2a1c0c"/><circle cx="70.9" cy="25.1" r="1.2" fill="#2a1c0c"/><circle cx="55.3" cy="50.2" r="1.1" fill="#8a6420"/><circle cx="33.7" cy="9.0" r="0.6" fill="#6a4a18"/><circle cx="11.8" cy="47.4" r="0.9" fill="#6a4a18"/><circle cx="10.6" cy="11.7" r="1.2" fill="#54381a"/><circle cx="56.8" cy="82.7" r="0.6" fill="#54381a"/><circle cx="44.4" cy="38.1" r="1.3" fill="#8a6420"/><circle cx="90.0" cy="37.3" r="0.8" fill="#b08030"/><circle cx="57.9" cy="3.5" r="1.3" fill="#8a6420"/><circle cx="74.6" cy="32.5" r="0.7" fill="#6a4a18"/><circle cx="68.7" cy="80.9" r="1.0" fill="#6a4a18"/><circle cx="78.2" cy="81.4" r="0.5" fill="#54381a"/><circle cx="14.1" cy="65.3" r="0.8" fill="#b08030"/><circle cx="40.5" cy="60.7" r="0.8" fill="#54381a"/><circle cx="18.0" cy="31.1" r="0.7" fill="#2a1c0c"/><circle cx="2.0" cy="13.4" r="1.3" fill="#b08030"/><circle cx="95.8" cy="43.6" r="0.5" fill="#8a6420"/><circle cx="3.3" cy="61.6" r="0.7" fill="#2a1c0c"/><circle cx="59.9" cy="60.3" r="1.1" fill="#8a6420"/><circle cx="59.6" cy="24.1" r="0.9" fill="#c0902c"/><circle cx="22.7" cy="3.8" r="0.6" fill="#6a4a18"/><circle cx="62.2" cy="11.6" r="1.0" fill="#54381a"/><circle cx="86.5" cy="8.1" r="1.0" fill="#a67a28"/><circle cx="42.2" cy="49.1" r="1.2" fill="#c0902c"/><circle cx="55.4" cy="26.3" r="1.1" fill="#2a1c0c"/><circle cx="52.4" cy="80.6" r="1.0" fill="#54381a"/><circle cx="21.3" cy="37.1" r="0.9" fill="#6a4a18"/><circle cx="44.2" cy="52.6" r="1.0" fill="#c0902c"/><circle cx="78.6" cy="3.0" r="0.8" fill="#a67a28"/><circle cx="49.2" cy="36.8" r="1.0" fill="#8a6420"/><circle cx="88.7" cy="15.6" r="1.3" fill="#6a4a18"/><circle cx="53.4" cy="47.2" r="0.7" fill="#a67a28"/><circle cx="28.4" cy="74.1" r="0.6" fill="#8a6420"/><circle cx="58.2" cy="33.4" r="1.0" fill="#54381a"/><circle cx="37.2" cy="42.2" r="1.1" fill="#8a6420"/><circle cx="50.0" cy="95.0" r="1.0" fill="#a67a28"/><circle cx="40.0" cy="64.2" r="0.6" fill="#a67a28"/><circle cx="59.2" cy="81.6" r="1.2" fill="#54381a"/><circle cx="9.1" cy="82.2" r="1.2" fill="#c0902c"/><circle cx="25.8" cy="60.5" r="1.0" fill="#2a1c0c"/><circle cx="12.2" cy="83.6" r="0.5" fill="#b08030"/><circle cx="52.8" cy="11.3" r="0.8" fill="#54381a"/><circle cx="14.4" cy="81.6" r="0.7" fill="#54381a"/><circle cx="58.3" cy="36.4" r="0.9" fill="#c0902c"/><circle cx="27.7" cy="33.9" r="0.8" fill="#54381a"/><circle cx="53.3" cy="36.9" r="0.8" fill="#b08030"/><circle cx="71.6" cy="95.0" r="0.8" fill="#6a4a18"/><circle cx="17.7" cy="29.2" r="0.6" fill="#54381a"/><circle cx="36.2" cy="22.3" r="1.2" fill="#6a4a18"/><circle cx="31.1" cy="81.0" r="1.2" fill="#6a4a18"/><circle cx="19.6" cy="40.9" r="1.2" fill="#8a6420"/><circle cx="2.5" cy="24.6" r="1.2" fill="#6a4a18"/><circle cx="88.3" cy="74.3" r="0.9" fill="#c0902c"/><circle cx="49.7" cy="49.7" r="1.0" fill="#c0902c"/><circle cx="44.6" cy="3.9" r="1.0" fill="#c0902c"/><circle cx="91.0" cy="64.9" r="0.9" fill="#8a6420"/><circle cx="39.3" cy="48.1" r="1.0" fill="#54381a"/><circle cx="14.8" cy="18.1" r="0.8" fill="#c0902c"/><circle cx="42.3" cy="60.0" r="1.3" fill="#6a4a18"/><circle cx="66.4" cy="71.7" r="0.6" fill="#6a4a18"/><circle cx="30.5" cy="93.9" r="1.2" fill="#54381a"/><circle cx="16.9" cy="63.0" r="0.7" fill="#6a4a18"/><circle cx="78.8" cy="95.1" r="1.2" fill="#c0902c"/><circle cx="60.6" cy="50.3" r="1.2" fill="#a67a28"/><circle cx="48.5" cy="18.1" r="0.6" fill="#2a1c0c"/><circle cx="54.2" cy="10.2" r="1.0" fill="#2a1c0c"/><circle cx="61.1" cy="4.1" r="0.8" fill="#b08030"/><circle cx="0.3" cy="68.2" r="0.9" fill="#6a4a18"/><circle cx="38.2" cy="9.5" r="0.5" fill="#8a6420"/><circle cx="18.9" cy="47.8" r="0.9" fill="#6a4a18"/><circle cx="83.6" cy="86.0" r="0.9" fill="#a67a28"/><circle cx="55.1" cy="39.5" r="0.6" fill="#a67a28"/><circle cx="49.8" cy="48.9" r="0.5" fill="#8a6420"/><circle cx="16.4" cy="50.2" r="1.2" fill="#54381a"/><circle cx="41.3" cy="76.8" r="1.0" fill="#2a1c0c"/><circle cx="74.0" cy="31.0" r="1.1" fill="#6a4a18"/><circle cx="26.4" cy="3.2" r="1.0" fill="#b08030"/><circle cx="86.8" cy="55.9" r="0.8" fill="#c0902c"/><circle cx="59.9" cy="1.9" r="0.7" fill="#c0902c"/><circle cx="55.9" cy="92.1" r="0.9" fill="#54381a"/><circle cx="22.9" cy="21.4" r="0.6" fill="#54381a"/><circle cx="82.1" cy="30.2" r="1.2" fill="#b08030"/><circle cx="43.7" cy="40.2" r="0.7" fill="#c0902c"/><circle cx="94.0" cy="6.5" r="1.0" fill="#2a1c0c"/><circle cx="69.0" cy="21.3" r="0.7" fill="#2a1c0c"/><circle cx="46.5" cy="76.1" r="0.7" fill="#a67a28"/><circle cx="16.3" cy="36.4" r="0.5" fill="#6a4a18"/><circle cx="38.0" cy="34.8" r="0.8" fill="#b08030"/><circle cx="37.0" cy="38.7" r="0.6" fill="#8a6420"/><circle cx="40.5" cy="87.6" r="0.9" fill="#c0902c"/><circle cx="18.4" cy="27.2" r="0.7" fill="#8a6420"/><circle cx="26.8" cy="2.4" r="1.1" fill="#a67a28"/><circle cx="67.8" cy="8.9" r="0.7" fill="#b08030"/><circle cx="75.6" cy="53.3" r="0.9" fill="#b08030"/><circle cx="77.3" cy="15.3" r="0.8" fill="#2a1c0c"/><circle cx="38.9" cy="60.4" r="1.0" fill="#6a4a18"/><circle cx="91.3" cy="48.5" r="0.7" fill="#c0902c"/><circle cx="64.8" cy="90.4" r="1.3" fill="#54381a"/><circle cx="86.4" cy="56.4" r="0.8" fill="#a67a28"/><circle cx="38.8" cy="49.0" r="0.6" fill="#b08030"/><circle cx="11.8" cy="49.3" r="0.9" fill="#6a4a18"/><circle cx="70.7" cy="73.4" r="0.5" fill="#2a1c0c"/><circle cx="54.5" cy="29.8" r="0.8" fill="#8a6420"/><circle cx="66.7" cy="74.5" r="0.7" fill="#a67a28"/><circle cx="63.6" cy="10.5" r="0.9" fill="#6a4a18"/><circle cx="77.3" cy="72.8" r="0.7" fill="#2a1c0c"/><circle cx="29.9" cy="21.7" r="0.6" fill="#2a1c0c"/><circle cx="38.3" cy="34.2" r="1.2" fill="#c0902c"/><circle cx="74.4" cy="84.7" r="1.2" fill="#a67a28"/><circle cx="89.9" cy="16.9" r="0.8" fill="#b08030"/><circle cx="63.7" cy="33.7" r="0.8" fill="#2a1c0c"/><circle cx="67.6" cy="44.4" r="1.3" fill="#c0902c"/><circle cx="33.8" cy="60.4" r="0.6" fill="#8a6420"/><circle cx="26.0" cy="58.5" r="0.7" fill="#2a1c0c"/><circle cx="3.9" cy="3.8" r="0.6" fill="#a67a28"/><circle cx="72.7" cy="15.0" r="1.1" fill="#54381a"/><circle cx="29.8" cy="61.3" r="0.6" fill="#b08030"/><circle cx="21.9" cy="47.8" r="0.9" fill="#c0902c"/><circle cx="64.3" cy="55.2" r="1.2" fill="#8a6420"/><circle cx="80.1" cy="74.5" r="0.7" fill="#8a6420"/><circle cx="84.0" cy="56.2" r="1.1" fill="#a67a28"/><circle cx="65.4" cy="3.6" r="0.8" fill="#b08030"/><circle cx="87.8" cy="72.0" r="0.6" fill="#2a1c0c"/><circle cx="71.4" cy="95.8" r="1.0" fill="#a67a28"/><circle cx="27.0" cy="8.6" r="1.3" fill="#c0902c"/><circle cx="42.5" cy="32.7" r="0.9" fill="#2a1c0c"/><circle cx="79.7" cy="60.3" r="0.9" fill="#8a6420"/><circle cx="65.0" cy="19.8" r="1.0" fill="#b08030"/><circle cx="89.1" cy="12.3" r="1.1" fill="#8a6420"/><circle cx="91.4" cy="79.2" r="0.9" fill="#a67a28"/><circle cx="52.5" cy="93.1" r="1.0" fill="#54381a"/><circle cx="25.0" cy="92.5" r="0.6" fill="#6a4a18"/><circle cx="39.5" cy="19.3" r="0.7" fill="#a67a28"/><circle cx="65.9" cy="46.7" r="0.9" fill="#2a1c0c"/><circle cx="23.2" cy="49.5" r="0.9" fill="#2a1c0c"/><circle cx="33.7" cy="28.7" r="1.2" fill="#a67a28"/><circle cx="56.4" cy="23.1" r="1.0" fill="#8a6420"/><circle cx="52.6" cy="73.0" r="0.6" fill="#2a1c0c"/><circle cx="14.9" cy="94.0" r="1.2" fill="#c0902c"/><circle cx="79.8" cy="11.0" r="0.7" fill="#6a4a18"/><circle cx="46.7" cy="4.2" r="1.2" fill="#6a4a18"/><circle cx="18.9" cy="67.4" r="0.9" fill="#8a6420"/><circle cx="15.5" cy="42.7" r="1.0" fill="#6a4a18"/><circle cx="16.1" cy="6.9" r="0.5" fill="#b08030"/><circle cx="46.6" cy="71.7" r="0.8" fill="#2a1c0c"/><circle cx="54.1" cy="10.4" r="0.9" fill="#c0902c"/><circle cx="46.9" cy="75.3" r="0.8" fill="#6a4a18"/><circle cx="88.3" cy="61.9" r="1.0" fill="#2a1c0c"/><circle cx="62.6" cy="24.1" r="0.7" fill="#a67a28"/><circle cx="71.8" cy="2.4" r="0.8" fill="#a67a28"/><circle cx="28.4" cy="17.8" r="1.0" fill="#b08030"/><circle cx="86.0" cy="65.5" r="0.6" fill="#2a1c0c"/><circle cx="79.7" cy="71.3" r="0.8" fill="#a67a28"/><circle cx="62.1" cy="34.2" r="0.7" fill="#a67a28"/><circle cx="52.9" cy="35.5" r="1.2" fill="#a67a28"/><circle cx="5.5" cy="10.3" r="1.1" fill="#b08030"/><circle cx="96.0" cy="38.7" r="0.5" fill="#a67a28"/><circle cx="47.5" cy="48.0" r="0.6" fill="#6a4a18"/><circle cx="57.9" cy="60.1" r="0.6" fill="#a67a28"/><circle cx="15.7" cy="42.5" r="1.3" fill="#8a6420"/><circle cx="94.0" cy="81.7" r="0.9" fill="#a67a28"/><circle cx="69.4" cy="0.3" r="1.2" fill="#b08030"/><circle cx="80.0" cy="49.1" r="0.6" fill="#8a6420"/><circle cx="63.5" cy="49.4" r="0.8" fill="#6a4a18"/><circle cx="6.0" cy="0.8" r="1.3" fill="#a67a28"/><circle cx="86.8" cy="15.8" r="0.7" fill="#c0902c"/><circle cx="77.2" cy="64.8" r="1.0" fill="#c0902c"/><circle cx="8.2" cy="31.1" r="0.9" fill="#54381a"/><circle cx="87.2" cy="83.1" r="1.3" fill="#54381a"/><circle cx="59.5" cy="77.9" r="0.5" fill="#2a1c0c"/><circle cx="31.8" cy="63.2" r="1.0" fill="#c0902c"/><circle cx="91.5" cy="46.2" r="1.0" fill="#6a4a18"/><circle cx="83.1" cy="50.9" r="1.0" fill="#b08030"/><circle cx="18.1" cy="65.2" r="0.9" fill="#8a6420"/><circle cx="14.1" cy="55.6" r="0.9" fill="#c0902c"/><circle cx="34.6" cy="23.1" r="0.9" fill="#6a4a18"/><circle cx="11.0" cy="17.3" r="1.2" fill="#54381a"/><circle cx="72.0" cy="21.2" r="1.2" fill="#2a1c0c"/><circle cx="9.1" cy="51.0" r="0.7" fill="#c0902c"/><circle cx="21.8" cy="44.0" r="0.9" fill="#2a1c0c"/><circle cx="10.8" cy="49.3" r="1.0" fill="#8a6420"/><circle cx="81.7" cy="65.2" r="1.1" fill="#a67a28"/><circle cx="82.9" cy="52.9" r="1.1" fill="#b08030"/><circle cx="91.0" cy="60.2" r="1.3" fill="#54381a"/><circle cx="9.8" cy="79.7" r="0.8" fill="#a67a28"/><circle cx="92.9" cy="18.4" r="0.9" fill="#8a6420"/><circle cx="13.1" cy="74.5" r="0.5" fill="#a67a28"/><circle cx="4.5" cy="4.0" r="1.1" fill="#a67a28"/><circle cx="44.1" cy="11.6" r="0.6" fill="#8a6420"/><circle cx="59.6" cy="83.7" r="1.0" fill="#2a1c0c"/><circle cx="83.6" cy="16.1" r="1.1" fill="#6a4a18"/><circle cx="77.2" cy="70.7" r="0.5" fill="#6a4a18"/><circle cx="11.8" cy="35.8" r="1.1" fill="#6a4a18"/><circle cx="69.3" cy="4.2" r="1.0" fill="#8a6420"/><circle cx="34.2" cy="31.4" r="1.0" fill="#8a6420"/><circle cx="88.8" cy="64.8" r="0.7" fill="#a67a28"/><circle cx="66.6" cy="2.0" r="1.3" fill="#c0902c"/><circle cx="10.9" cy="2.0" r="0.6" fill="#b08030"/><circle cx="24.8" cy="14.4" r="1.2" fill="#b08030"/><circle cx="66.0" cy="36.6" r="0.6" fill="#6a4a18"/><circle cx="51.7" cy="66.2" r="1.1" fill="#c0902c"/><circle cx="1.3" cy="32.9" r="0.6" fill="#54381a"/><circle cx="46.5" cy="3.0" r="1.2" fill="#8a6420"/><circle cx="17.5" cy="78.6" r="1.0" fill="#c0902c"/><circle cx="80.9" cy="92.9" r="1.1" fill="#c0902c"/><circle cx="37.8" cy="83.8" r="1.0" fill="#8a6420"/><circle cx="34.6" cy="50.7" r="0.7" fill="#a67a28"/><circle cx="56.6" cy="4.2" r="0.6" fill="#6a4a18"/><circle cx="69.8" cy="31.8" r="0.9" fill="#6a4a18"/><circle cx="30.2" cy="32.2" r="0.9" fill="#a67a28"/><circle cx="2.0" cy="44.1" r="1.3" fill="#8a6420"/><circle cx="60.6" cy="69.8" r="0.6" fill="#c0902c"/><circle cx="26.2" cy="48.0" r="0.7" fill="#54381a"/><circle cx="55.1" cy="56.1" r="0.6" fill="#2a1c0c"/><circle cx="3.3" cy="53.8" r="1.1" fill="#b08030"/><circle cx="19.1" cy="40.9" r="1.0" fill="#8a6420"/><circle cx="34.8" cy="27.0" r="1.1" fill="#b08030"/><circle cx="76.5" cy="13.5" r="0.6" fill="#b08030"/><circle cx="32.8" cy="34.8" r="1.2" fill="#a67a28"/><circle cx="33.6" cy="52.9" r="0.8" fill="#8a6420"/><circle cx="67.6" cy="64.5" r="1.2" fill="#b08030"/><circle cx="46.2" cy="35.3" r="0.7" fill="#a67a28"/><circle cx="95.7" cy="14.5" r="0.7" fill="#b08030"/><circle cx="64.5" cy="38.9" r="0.8" fill="#b08030"/><circle cx="29.0" cy="16.2" r="0.6" fill="#6a4a18"/><circle cx="69.1" cy="24.2" r="1.0" fill="#2a1c0c"/><circle cx="90.0" cy="32.7" r="1.2" fill="#54381a"/><circle cx="88.8" cy="56.2" r="0.7" fill="#6a4a18"/><circle cx="94.8" cy="34.3" r="1.1" fill="#c0902c"/><circle cx="69.2" cy="88.5" r="1.2" fill="#6a4a18"/><circle cx="86.3" cy="26.5" r="0.7" fill="#8a6420"/><circle cx="72.8" cy="60.1" r="0.7" fill="#8a6420"/><circle cx="21.0" cy="38.4" r="0.7" fill="#54381a"/><circle cx="27.1" cy="48.2" r="0.6" fill="#a67a28"/><circle cx="70.5" cy="92.5" r="1.0" fill="#8a6420"/><circle cx="7.1" cy="78.4" r="1.0" fill="#2a1c0c"/><circle cx="13.1" cy="18.1" r="0.9" fill="#8a6420"/><circle cx="61.4" cy="88.6" r="0.7" fill="#6a4a18"/><circle cx="83.3" cy="2.6" r="0.9" fill="#54381a"/><circle cx="65.2" cy="32.4" r="0.5" fill="#c0902c"/><circle cx="76.4" cy="8.4" r="1.0" fill="#b08030"/><circle cx="47.5" cy="57.4" r="0.7" fill="#c0902c"/><circle cx="83.8" cy="2.5" r="0.8" fill="#2a1c0c"/><circle cx="94.8" cy="5.4" r="1.0" fill="#2a1c0c"/><circle cx="80.2" cy="15.0" r="0.5" fill="#a67a28"/><circle cx="13.7" cy="73.7" r="0.6" fill="#b08030"/><circle cx="34.7" cy="33.0" r="1.0" fill="#b08030"/><circle cx="53.3" cy="63.1" r="1.0" fill="#6a4a18"/><circle cx="22.1" cy="59.4" r="1.2" fill="#c0902c"/><circle cx="73.3" cy="74.5" r="0.7" fill="#b08030"/><circle cx="52.8" cy="67.8" r="0.9" fill="#6a4a18"/><circle cx="50.2" cy="90.3" r="0.6" fill="#8a6420"/><circle cx="53.6" cy="9.6" r="1.1" fill="#6a4a18"/><circle cx="14.5" cy="60.4" r="0.8" fill="#8a6420"/><circle cx="89.9" cy="60.0" r="0.6" fill="#54381a"/><circle cx="48.2" cy="53.3" r="0.6" fill="#54381a"/><circle cx="35.1" cy="14.3" r="0.6" fill="#2a1c0c"/><circle cx="82.1" cy="74.8" r="0.9" fill="#6a4a18"/><circle cx="74.7" cy="23.3" r="1.3" fill="#c0902c"/><circle cx="20.5" cy="87.6" r="1.2" fill="#c0902c"/><circle cx="44.2" cy="31.1" r="1.2" fill="#8a6420"/><circle cx="63.4" cy="1.5" r="1.1" fill="#c0902c"/><circle cx="64.7" cy="33.7" r="0.7" fill="#c0902c"/><circle cx="39.4" cy="88.2" r="1.3" fill="#2a1c0c"/><circle cx="82.6" cy="2.9" r="0.5" fill="#2a1c0c"/><circle cx="41.6" cy="22.2" r="0.7" fill="#b08030"/><circle cx="40.9" cy="26.8" r="1.2" fill="#c0902c"/><circle cx="20.8" cy="54.7" r="0.6" fill="#b08030"/><circle cx="89.7" cy="73.8" r="1.3" fill="#a67a28"/><circle cx="79.0" cy="27.1" r="0.8" fill="#c0902c"/><circle cx="83.7" cy="24.0" r="0.8" fill="#54381a"/><circle cx="57.4" cy="43.5" r="1.0" fill="#b08030"/><circle cx="20.1" cy="84.8" r="0.8" fill="#b08030"/><circle cx="74.3" cy="42.2" r="0.8" fill="#a67a28"/><circle cx="95.5" cy="28.6" r="0.5" fill="#8a6420"/><circle cx="14.6" cy="87.6" r="0.6" fill="#6a4a18"/><circle cx="14.5" cy="70.7" r="0.6" fill="#a67a28"/><circle cx="44.6" cy="38.1" r="0.8" fill="#2a1c0c"/><circle cx="88.2" cy="68.8" r="1.2" fill="#8a6420"/><circle cx="56.2" cy="19.3" r="1.0" fill="#8a6420"/><circle cx="3.6" cy="48.5" r="0.7" fill="#c0902c"/><circle cx="67.0" cy="69.9" r="0.5" fill="#6a4a18"/><circle cx="6.2" cy="10.6" r="1.3" fill="#a67a28"/><circle cx="50.4" cy="0.2" r="0.7" fill="#54381a"/><circle cx="14.2" cy="70.9" r="0.9" fill="#8a6420"/><circle cx="50.9" cy="80.6" r="1.3" fill="#8a6420"/><circle cx="33.5" cy="20.7" r="1.3" fill="#a67a28"/><circle cx="70.2" cy="26.2" r="0.6" fill="#6a4a18"/><circle cx="25.8" cy="92.8" r="0.7" fill="#8a6420"/><circle cx="39.2" cy="53.4" r="0.8" fill="#8a6420"/><circle cx="31.3" cy="4.0" r="0.9" fill="#6a4a18"/><circle cx="52.7" cy="66.3" r="1.3" fill="#b08030"/><circle cx="71.5" cy="25.8" r="0.8" fill="#54381a"/><circle cx="40.2" cy="93.4" r="0.8" fill="#c0902c"/><circle cx="84.6" cy="77.2" r="1.2" fill="#2a1c0c"/><circle cx="0.5" cy="58.4" r="1.2" fill="#6a4a18"/><circle cx="66.6" cy="70.1" r="1.3" fill="#b08030"/><circle cx="19.0" cy="11.2" r="1.2" fill="#b08030"/><circle cx="3.2" cy="68.8" r="0.8" fill="#54381a"/><circle cx="31.1" cy="62.0" r="0.9" fill="#6a4a18"/><circle cx="43.7" cy="55.5" r="0.9" fill="#2a1c0c"/><circle cx="81.9" cy="49.0" r="1.0" fill="#c0902c"/><circle cx="22.5" cy="60.4" r="1.1" fill="#c0902c"/><circle cx="34.1" cy="6.2" r="1.3" fill="#6a4a18"/><circle cx="58.8" cy="65.0" r="0.8" fill="#2a1c0c"/><circle cx="76.5" cy="63.8" r="1.2" fill="#b08030"/><circle cx="25.4" cy="87.2" r="0.9" fill="#2a1c0c"/><circle cx="33.4" cy="56.6" r="1.0" fill="#a67a28"/><circle cx="6.3" cy="72.7" r="0.8" fill="#a67a28"/><circle cx="50.6" cy="78.1" r="0.7" fill="#a67a28"/><circle cx="14.6" cy="63.5" r="0.6" fill="#b08030"/><circle cx="82.2" cy="62.6" r="1.2" fill="#6a4a18"/><circle cx="36.6" cy="79.9" r="1.2" fill="#8a6420"/><circle cx="39.4" cy="67.5" r="0.8" fill="#6a4a18"/><circle cx="34.2" cy="77.1" r="0.9" fill="#c0902c"/><circle cx="63.6" cy="26.4" r="0.7" fill="#c0902c"/><circle cx="66.7" cy="43.1" r="0.9" fill="#b08030"/><circle cx="16.8" cy="49.7" r="0.5" fill="#a67a28"/><circle cx="35.2" cy="50.0" r="0.7" fill="#6a4a18"/><circle cx="50.2" cy="76.9" r="0.7" fill="#54381a"/><circle cx="19.3" cy="54.8" r="0.5" fill="#a67a28"/><circle cx="29.4" cy="52.3" r="1.2" fill="#6a4a18"/><circle cx="23.2" cy="80.1" r="0.6" fill="#2a1c0c"/><circle cx="47.4" cy="8.5" r="0.6" fill="#b08030"/><circle cx="27.9" cy="75.0" r="1.2" fill="#2a1c0c"/><circle cx="42.5" cy="35.2" r="1.1" fill="#6a4a18"/><circle cx="93.1" cy="41.4" r="1.0" fill="#6a4a18"/><circle cx="33.8" cy="37.0" r="1.0" fill="#54381a"/><circle cx="18.4" cy="93.3" r="1.1" fill="#6a4a18"/><circle cx="6.1" cy="19.5" r="1.2" fill="#8a6420"/><circle cx="72.6" cy="36.4" r="0.9" fill="#c0902c"/><circle cx="89.8" cy="61.7" r="1.1" fill="#8a6420"/><circle cx="56.9" cy="44.4" r="0.9" fill="#b08030"/><circle cx="41.9" cy="95.5" r="0.6" fill="#8a6420"/><circle cx="42.2" cy="47.2" r="0.9" fill="#b08030"/><circle cx="0.9" cy="22.3" r="0.7" fill="#54381a"/><circle cx="3.9" cy="65.3" r="0.9" fill="#b08030"/><circle cx="37.2" cy="44.1" r="0.6" fill="#b08030"/><circle cx="7.4" cy="78.5" r="0.6" fill="#8a6420"/><circle cx="81.4" cy="20.7" r="0.9" fill="#b08030"/><circle cx="65.4" cy="68.3" r="0.9" fill="#8a6420"/><circle cx="52.8" cy="71.8" r="1.2" fill="#a67a28"/><circle cx="95.8" cy="78.4" r="1.2" fill="#a67a28"/><circle cx="30.8" cy="18.3" r="1.3" fill="#a67a28"/><circle cx="94.9" cy="26.4" r="0.7" fill="#6a4a18"/><circle cx="36.8" cy="63.7" r="0.7" fill="#c0902c"/><circle cx="49.1" cy="40.3" r="0.5" fill="#6a4a18"/><circle cx="23.9" cy="36.5" r="0.8" fill="#54381a"/><circle cx="24.7" cy="19.4" r="0.5" fill="#54381a"/><circle cx="62.6" cy="89.5" r="1.0" fill="#2a1c0c"/><circle cx="56.0" cy="35.1" r="1.1" fill="#a67a28"/><circle cx="43.8" cy="67.9" r="1.0" fill="#2a1c0c"/><circle cx="30.2" cy="51.2" r="0.8" fill="#54381a"/><circle cx="79.0" cy="3.4" r="0.7" fill="#c0902c"/><circle cx="28.0" cy="68.2" r="1.1" fill="#54381a"/><circle cx="58.6" cy="39.0" r="1.1" fill="#a67a28"/><circle cx="84.3" cy="5.5" r="0.8" fill="#2a1c0c"/><circle cx="11.9" cy="13.2" r="1.2" fill="#b08030"/><circle cx="57.2" cy="17.3" r="1.2" fill="#54381a"/><circle cx="70.8" cy="15.8" r="0.7" fill="#2a1c0c"/>
<rect x="0" y="0" width="96" height="96" fill="url(#vig)"/>
<path d="M45 26 Q52 22 60 24 Q72 26 78 34 Q84 44 84 62 L82 96 L46 96 Q48 70 46 50 Z" fill="#141210"/>
<path d="M52 24 L58 42 L63 23 Z" fill="#d8d8d8"/>
<path d="M54 25 L58 28 L62 25 L58 23 Z" fill="#111"/>
<circle cx="64" cy="31.5" r="2.6" fill="#e8dcc0"/>
<path d="M63 35.5 L70 34.5 L69.5 37 L63.5 37.5Z" fill="#ddd6c8"/>
<ellipse cx="53" cy="15.5" rx="5.8" ry="7.2" fill="#c89a7a"/>
<path d="M46.5 13 Q47 5 54 5 Q61 5.5 60.5 13 Q57 9 53 9.5 Q49 10 46.5 13Z" fill="#4a3020"/>
<path d="M51 21 Q53 23 55 21" stroke="#8a5a48" stroke-width=".6" fill="none"/>
<path d="M25 45 Q31 41 38 42 Q46 41 51 45 Q54 52 53 62 Q56 80 57 96 L23 96 Q21 80 22 62 Q20 51 25 45Z" fill="url(#dress)"/><path d="M25 47 Q21 60 22 80 L26 86 Q25 66 28 50Z" fill="#c0aa80" opacity=".6"/><path d="M51 47 Q55 60 54 80 L50 86 Q51 66 48 50Z" fill="#c0aa80" opacity=".5"/>
<path d="M32 42 Q38 50 46 42 L46 40 L32 40 Z" fill="#e0c0a0"/>
<ellipse cx="37.5" cy="29" rx="6" ry="7" fill="#e8c8a8"/>
<path d="M30.5 27 Q30 18 38 18 Q46 18.5 44.5 27 Q42 22 37.5 22.5 Q33 23 30.5 27Z" fill="#cdb07a"/>
<path d="M35.5 33 Q37.5 34 39.5 33" stroke="#b04040" stroke-width=".8" fill="none"/>
<path d="M33 88 Q36 92 40 90 M49 88 Q51 91 54 89" stroke="#d8b898" stroke-width="2" fill="none"/>
</g>
<circle cx="48.3" cy="48.3" r="46.6" fill="none" stroke="url(#ring)" stroke-width="3"/>
</svg>
<div class="t" style="top:185.90px;font-size:13.2px;line-height:13.2px;color:#fff;letter-spacing:-0.289px;-webkit-text-stroke:0.55px #fff;left:77.80px;">Seu canal</div>
<div class="t" style="top:204.60px;font-size:11.2px;line-height:11.2px;color:#aaaaaa;letter-spacing:-0.354px;-webkit-text-stroke:0.25px #aaaaaa;left:62.15px;">Contos de Milhões</div>
<div class="r" style="left:6.00px;top:315.00px;width:200.00px;height:41.00px;background:#1f1f1f;border-radius:8px;"></div>
<svg class="r" style="left:0;top:0" width="217" height="1112" viewBox="0 0 217 1112" fill="none" stroke="#fff" stroke-width="1.9" stroke-linejoin="round" stroke-linecap="round">
<rect x="19.2" y="244.9" width="5.7" height="7.3" rx="1.6"/><rect x="28.9" y="244.9" width="5.5" height="3.9" rx="1.6"/>
<rect x="19.2" y="255.8" width="5.7" height="4.2" rx="1.6"/><rect x="28.9" y="252.9" width="5.5" height="7.1" rx="1.6"/>
<rect x="22.7" y="286.1" width="11.7" height="12.2" rx="1.4"/><path d="M19 288.9V300.5Q19 301.9 20.4 301.9H32"/><path d="M26.8 290.3L31.3 292.65L26.8 295Z" fill="#fff" stroke="none"/>
<rect x="18.1" y="326.8" width="17.5" height="17.2" rx="2.2" fill="#fff" stroke="none"/>
<path d="M23.4 334V339.8M26.85 331V339.8M30.3 336V339.8" stroke="#1f1f1f" stroke-width="2" stroke-linecap="butt"/>
<circle cx="26.65" cy="375.2" r="2.5" stroke-width="1.8"/><path d="M22 386C22 382.6 24.1 380.2 26.75 380.2C29.4 380.2 31.5 382.6 31.5 386" stroke-width="1.8"/>
<path d="M21.4 370.1A2.4 2.4 0 1 0 21.4 374.3M31.9 370.1A2.4 2.4 0 1 1 31.9 374.3M17 382.8C17.3 379.9 18.9 378 21.2 377.6M36.3 382.8C36 379.9 34.4 378 32.1 377.6" stroke-width="1.8"/>
<rect x="18.1" y="412.1" width="17" height="13.4" rx="1.3"/><path d="M21.2 418.2H23.4M26.4 418.2H32.3M21.2 422H27.3M29.8 422H32.3" stroke-width="1.8"/>
<circle cx="26.65" cy="460" r="8.5" stroke-width="1.8"/><path d="M29.4 457.5A3.7 3.7 0 1 0 29.4 462.5" stroke-width="1.9"/>
<circle cx="26.65" cy="501.6" r="8.5" stroke-width="1.8"/><path d="M29.2 498.7C28.8 497.6 27.9 497 26.7 497C25.2 497 24.2 497.9 24.2 499.1C24.2 502.1 29.3 500.9 29.3 504C29.3 505.3 28.2 506.1 26.7 506.1C25.4 506.1 24.4 505.4 24 504.4M26.7 495.3V497M26.7 506.1V507.9" stroke-width="1.7"/>
<path d="M20.6 549.6L29.3 540.9" stroke-width="4.6"/><path d="M20.6 549.6L29.3 540.9" stroke="#282828" stroke-width="1.4"/>
<path d="M22.60 534.20 Q23.38 536.22 25.40 537.00 Q23.38 537.78 22.60 539.80 Q21.82 537.78 19.80 537.00 Q21.82 536.22 22.60 534.20Z M32.70 534.20 Q33.48 536.22 35.50 537.00 Q33.48 537.78 32.70 539.80 Q31.92 537.78 29.90 537.00 Q31.92 536.22 32.70 534.20Z M33.60 544.00 Q34.38 546.02 36.40 546.80 Q34.38 547.58 33.60 549.60 Q32.82 547.58 30.80 546.80 Q32.82 546.02 33.60 544.00Z" fill="#fff" stroke="none"/>
<rect x="23.5" y="577.1" width="10.5" height="10.6" rx="1.3"/><path d="M19.3 580.2V590.6Q19.3 591.8 20.5 591.8H31.5"/><circle cx="27.6" cy="584.6" r="1.6" stroke-width="1.6"/><path d="M29.2 584.6V579.6H31" stroke-width="1.6"/>
<path d="M23.60 1049.06 Q23.24 1048.92 24.48 1046.53 Q26.80 1045.20 29.12 1046.53 Q30.36 1048.92 30.00 1049.06 Q29.94 1048.68 32.63 1048.55 Q34.94 1049.90 34.95 1052.57 Q33.50 1054.84 33.20 1054.60 Q33.50 1054.36 34.95 1056.63 Q34.94 1059.30 32.63 1060.65 Q29.94 1060.52 30.00 1060.14 Q30.36 1060.28 29.12 1062.67 Q26.80 1064.00 24.48 1062.67 Q23.24 1060.28 23.60 1060.14 Q23.66 1060.52 20.97 1060.65 Q18.66 1059.30 18.65 1056.63 Q20.10 1054.36 20.40 1054.60 Q20.10 1054.84 18.65 1052.57 Q18.66 1049.90 20.97 1048.55 Q23.66 1048.68 23.60 1049.06Z" stroke-width="1.8"/><circle cx="26.8" cy="1054.6" r="2.6" stroke-width="1.8"/>
<path d="M19.8 1088.6H33.8Q35.6 1088.6 35.6 1090.4V1099.4Q35.6 1101.2 33.8 1101.2H26.4L22.8 1105V1101.2H19.8Q18.1 1101.2 18.1 1099.4V1090.4Q18.1 1088.6 19.8 1088.6Z" stroke-width="1.8"/>
<path d="M26.9 1091.6V1096.3" stroke-width="2" stroke-linecap="butt"/><circle cx="26.9" cy="1098.6" r="0.95" fill="#fff" stroke="none"/>
</svg>
<div class="t" style="top:246.00px;font-size:13.5px;line-height:13.5px;color:#fff;letter-spacing:-0.305px;-webkit-text-stroke:0.4px #fff;left:58.00px;">Painel</div>
<div class="t" style="top:287.45px;font-size:13.5px;line-height:13.5px;color:#fff;letter-spacing:-0.250px;-webkit-text-stroke:0.4px #fff;left:58.00px;">Conteúdo</div>
<div class="t" style="top:328.90px;font-size:13.5px;line-height:13.5px;color:#fff;letter-spacing:-0.052px;-webkit-text-stroke:0.6px #fff;left:58.00px;">Analytics</div>
<div class="t" style="top:370.35px;font-size:13.5px;line-height:13.5px;color:#fff;letter-spacing:-0.316px;-webkit-text-stroke:0.4px #fff;left:58.00px;">Comunidade</div>
<div class="t" style="top:411.80px;font-size:13.5px;line-height:13.5px;color:#fff;letter-spacing:-0.358px;-webkit-text-stroke:0.4px #fff;left:58.00px;">Legendas</div>
<div class="t" style="top:453.25px;font-size:13.5px;line-height:13.5px;color:#fff;letter-spacing:-0.279px;-webkit-text-stroke:0.4px #fff;left:58.00px;">Detecção de conteúdo</div>
<div class="t" style="top:494.70px;font-size:13.5px;line-height:13.5px;color:#fff;letter-spacing:-0.536px;-webkit-text-stroke:0.4px #fff;left:58.00px;">Ganhos</div>
<div class="t" style="top:536.15px;font-size:13.5px;line-height:13.5px;color:#fff;letter-spacing:-0.254px;-webkit-text-stroke:0.4px #fff;left:58.00px;">Personalização</div>
<div class="t" style="top:577.60px;font-size:13.5px;line-height:13.5px;color:#fff;letter-spacing:-0.227px;-webkit-text-stroke:0.4px #fff;left:58.00px;">Biblioteca de áudio</div>
<div class="t" style="top:1048.20px;font-size:13.5px;line-height:13.5px;color:#fff;letter-spacing:-0.296px;-webkit-text-stroke:0.4px #fff;left:58.00px;">Configurações</div>
<div class="t" style="top:1089.50px;font-size:13.5px;line-height:13.5px;color:#fff;letter-spacing:-0.365px;-webkit-text-stroke:0.4px #fff;left:58.00px;">Enviar feedback</div>
<div class="card" style="left:238px;top:130px;width:522px;height:603px"></div>
<div class="t" style="top:152.00px;font-size:15.5px;line-height:15.5px;color:#fff;letter-spacing:-0.160px;-webkit-text-stroke:0.55px #fff;left:259.80px;">Idade e gênero</div>
<div class="t" style="top:174.60px;font-size:11px;line-height:11px;color:#aaaaaa;letter-spacing:0.043px;-webkit-text-stroke:0.15px #aaaaaa;left:259.40px;">Visualizações · 1 de jan. – 31 de mar. de 2025</div>
<div class="t" style="top:217.20px;font-size:11px;line-height:11px;color:#fff;letter-spacing:0.120px;-webkit-text-stroke:0.3px #fff;left:259.40px;">Feminino</div>
<div class="t" style="top:217.20px;font-size:11px;line-height:11px;color:#fff;letter-spacing:-0.400px;-webkit-text-stroke:0.3px #fff;right:883.00px;">76,5%</div>
<div class="r" style="left:563.30px;top:219.20px;width:104.20px;height:7.00px;background:#bf6ff5;border-radius:3.5px;"></div>
<div class="t" style="top:251.80px;font-size:11px;line-height:11px;color:#fff;letter-spacing:0.120px;-webkit-text-stroke:0.3px #fff;left:259.40px;">Masculino</div>
<div class="t" style="top:251.80px;font-size:11px;line-height:11px;color:#fff;letter-spacing:-0.400px;-webkit-text-stroke:0.3px #fff;right:883.00px;">23,5%</div>
<div class="r" style="left:635.00px;top:253.80px;width:32.50px;height:7.00px;background:#bf6ff5;border-radius:3.5px;"></div>
<div class="t" style="top:286.40px;font-size:11px;line-height:11px;color:#fff;letter-spacing:0.120px;-webkit-text-stroke:0.3px #fff;left:259.40px;">Especificado pelo usuário</div>
<div class="t" style="top:286.40px;font-size:11px;line-height:11px;color:#fff;letter-spacing:-0.400px;-webkit-text-stroke:0.3px #fff;right:883.00px;">0%</div>
<div class="r" style="left:259.00px;top:322.00px;width:458.00px;height:1.00px;background:#3e3e3e;border-radius:0px;"></div>
<div class="t" style="top:349.50px;font-size:11px;line-height:11px;color:#fff;letter-spacing:0.120px;-webkit-text-stroke:0.3px #fff;left:259.40px;">13 a 17 anos</div>
<div class="t" style="top:349.50px;font-size:11px;line-height:11px;color:#fff;letter-spacing:-0.400px;-webkit-text-stroke:0.3px #fff;right:883.00px;">0%</div>
<div class="t" style="top:384.08px;font-size:11px;line-height:11px;color:#fff;letter-spacing:0.120px;-webkit-text-stroke:0.3px #fff;left:259.40px;">18 a 24 anos</div>
<div class="t" style="top:384.08px;font-size:11px;line-height:11px;color:#fff;letter-spacing:-0.400px;-webkit-text-stroke:0.3px #fff;right:883.00px;">0,9%</div>
<div class="r" style="left:659.60px;top:385.58px;width:8.00px;height:8.00px;background:#bf6ff5;border-radius:4px;"></div>
<div class="t" style="top:418.66px;font-size:11px;line-height:11px;color:#fff;letter-spacing:0.120px;-webkit-text-stroke:0.3px #fff;left:259.40px;">25 a 34 anos</div>
<div class="t" style="top:418.66px;font-size:11px;line-height:11px;color:#fff;letter-spacing:-0.400px;-webkit-text-stroke:0.3px #fff;right:883.00px;">3,5%</div>
<div class="r" style="left:659.60px;top:420.16px;width:8.00px;height:8.00px;background:#bf6ff5;border-radius:4px;"></div>
<div class="t" style="top:453.24px;font-size:11px;line-height:11px;color:#fff;letter-spacing:0.120px;-webkit-text-stroke:0.3px #fff;left:259.40px;">35 a 44 anos</div>
<div class="t" style="top:453.24px;font-size:11px;line-height:11px;color:#fff;letter-spacing:-0.400px;-webkit-text-stroke:0.3px #fff;right:883.00px;">5,1%</div>
<div class="r" style="left:659.60px;top:454.74px;width:8.00px;height:8.00px;background:#bf6ff5;border-radius:4px;"></div>
<div class="t" style="top:487.82px;font-size:11px;line-height:11px;color:#fff;letter-spacing:0.120px;-webkit-text-stroke:0.3px #fff;left:259.40px;">45 a 54 anos</div>
<div class="t" style="top:487.82px;font-size:11px;line-height:11px;color:#fff;letter-spacing:-0.400px;-webkit-text-stroke:0.3px #fff;right:883.00px;">10,1%</div>
<div class="r" style="left:653.40px;top:489.82px;width:14.10px;height:7.00px;background:#bf6ff5;border-radius:3.5px;"></div>
<div class="t" style="top:522.40px;font-size:11px;line-height:11px;color:#fff;letter-spacing:0.120px;-webkit-text-stroke:0.3px #fff;left:259.40px;">55 a 64 anos</div>
<div class="t" style="top:522.40px;font-size:11px;line-height:11px;color:#fff;letter-spacing:-0.400px;-webkit-text-stroke:0.3px #fff;right:883.00px;">25,4%</div>
<div class="r" style="left:632.50px;top:524.40px;width:35.00px;height:7.00px;background:#bf6ff5;border-radius:3.5px;"></div>
<div class="t" style="top:556.98px;font-size:11px;line-height:11px;color:#fff;letter-spacing:0.120px;-webkit-text-stroke:0.3px #fff;left:259.40px;">A partir de 65 anos</div>
<div class="t" style="top:556.98px;font-size:11px;line-height:11px;color:#fff;letter-spacing:-0.400px;-webkit-text-stroke:0.3px #fff;right:883.00px;">55,0%</div>
<div class="r" style="left:592.70px;top:558.98px;width:74.80px;height:7.00px;background:#bf6ff5;border-radius:3.5px;"></div>
<div class="r" style="left:259.00px;top:593.00px;width:458.00px;height:1.00px;background:#3e3e3e;border-radius:0px;"></div>
<svg class="r" style="left:259.5px;top:608px" width="14" height="14" viewBox="0 0 14 14"><circle cx="6.6" cy="6.6" r="5.5" fill="none" stroke="#b0b0b0" stroke-width="1.5"/><path d="M6.6 6.1v3.7" stroke="#b0b0b0" stroke-width="1.7"/><circle cx="6.6" cy="4.2" r="1" fill="#b0b0b0"/></svg>
<div class="t" style="top:610.70px;font-size:11px;line-height:11px;color:#aaaaaa;letter-spacing:0.101px;-webkit-text-stroke:0.15px #aaaaaa;left:285.00px;">A idade do espectador é baseada na idade que os usuários informam ao criar a conta.</div>
<div class="t" style="top:628.00px;font-size:11px;line-height:11px;color:#aaaaaa;letter-spacing:0.073px;-webkit-text-stroke:0.15px #aaaaaa;left:285.00px;">Ela ainda não reflete os usuários que o YouTube estima terem menos de 18 anos.</div>
<div class="t" style="top:645.50px;font-size:11px;line-height:11px;color:#3ea6ff;letter-spacing:0.030px;-webkit-text-stroke:0.15px #3ea6ff;left:285.00px;">Saiba mais.</div>
<div class="r" style="left:259.00px;top:680.60px;width:75.00px;height:31.00px;background:#3d3d3d;border-radius:16px;"></div>
<div class="t" style="top:688.60px;font-size:13px;line-height:13px;color:#fff;letter-spacing:-0.396px;-webkit-text-stroke:0.55px #fff;left:273.00px;">Ver mais</div>
<div class="card" style="left:781px;top:40px;width:522px;height:154px"></div>
<div class="t" style="top:121.10px;font-size:11.5px;line-height:11.5px;color:#aaaaaa;letter-spacing:-0.072px;-webkit-text-stroke:0.15px #aaaaaa;left:802.20px;">Últimos 28 dias</div>
<div class="t" style="top:155.00px;font-size:13px;line-height:13px;color:#aaaaaa;letter-spacing:-0.028px;-webkit-text-stroke:0.15px #aaaaaa;left:802.30px;">Não há dados suficientes para criar um relatório.</div>
<div class="card" style="left:781px;top:215px;width:522px;height:307px"></div>
<div class="t" style="top:237.00px;font-size:15.5px;line-height:15.5px;color:#fff;letter-spacing:0.222px;-webkit-text-stroke:0.55px #fff;left:802.20px;">Tipo de dispositivo</div>
<div class="t" style="top:260.00px;font-size:11px;line-height:11px;color:#aaaaaa;letter-spacing:0.054px;-webkit-text-stroke:0.15px #aaaaaa;left:802.00px;">Tempo de exibição (horas) · 1 de jan. – 31 de mar. de 2025</div>
<div class="r" style="left:803.5px;top:291px;width:476px;height:11px;border-radius:5.5px;overflow:hidden;background:#1e1e1e"><div class="r" style="left:0;top:0;width:326.5px;height:11px;background:#e8d6f4"></div><div class="r" style="left:328px;top:0;width:115px;height:11px;background:#c078f4"></div><div class="r" style="left:444.5px;top:0;width:16px;height:11px;background:#944dcc"></div><div class="r" style="left:462px;top:0;width:14px;height:11px;background:#e067a2"></div></div>
<div class="r" style="left:802.00px;top:329.70px;width:7.00px;height:7.00px;background:#e8d6f4;border-radius:3.5px;"></div>
<div class="t" style="top:328.20px;font-size:11px;line-height:11px;color:#fff;letter-spacing:0.120px;-webkit-text-stroke:0.3px #fff;left:815.80px;">Dispositivo móvel</div>
<div class="t" style="top:328.20px;font-size:11px;line-height:11px;color:#fff;letter-spacing:-0.400px;-webkit-text-stroke:0.3px #fff;right:319.60px;">69,2%</div>
<div class="r" style="left:802.00px;top:360.80px;width:7.00px;height:7.00px;background:#c078f4;border-radius:3.5px;"></div>
<div class="t" style="top:359.30px;font-size:11px;line-height:11px;color:#fff;letter-spacing:0.120px;-webkit-text-stroke:0.3px #fff;left:815.80px;">TV</div>
<div class="t" style="top:359.30px;font-size:11px;line-height:11px;color:#fff;letter-spacing:-0.400px;-webkit-text-stroke:0.3px #fff;right:319.60px;">24,4%</div>
<div class="r" style="left:802.00px;top:391.90px;width:7.00px;height:7.00px;background:#944dcc;border-radius:3.5px;"></div>
<div class="t" style="top:390.40px;font-size:11px;line-height:11px;color:#fff;letter-spacing:0.120px;-webkit-text-stroke:0.3px #fff;left:815.80px;">Computador</div>
<div class="t" style="top:390.40px;font-size:11px;line-height:11px;color:#fff;letter-spacing:-0.400px;-webkit-text-stroke:0.3px #fff;right:319.60px;">3,3%</div>
<div class="r" style="left:802.00px;top:423.00px;width:7.00px;height:7.00px;background:#e067a2;border-radius:3.5px;"></div>
<div class="t" style="top:421.50px;font-size:11px;line-height:11px;color:#fff;letter-spacing:0.120px;-webkit-text-stroke:0.3px #fff;left:815.80px;">Tablet</div>
<div class="t" style="top:421.50px;font-size:11px;line-height:11px;color:#fff;letter-spacing:-0.400px;-webkit-text-stroke:0.3px #fff;right:319.60px;">3,0%</div>
<div class="r" style="left:802.00px;top:469.60px;width:75.00px;height:31.00px;background:#3d3d3d;border-radius:16px;"></div>
<div class="t" style="top:477.60px;font-size:13px;line-height:13px;color:#fff;letter-spacing:-0.396px;-webkit-text-stroke:0.55px #fff;left:816.00px;">Ver mais</div>
<div class="card" style="left:781px;top:543px;width:522px;height:322px"></div>
<div class="t" style="top:564.70px;font-size:15.5px;line-height:15.5px;color:#fff;letter-spacing:0.098px;-webkit-text-stroke:0.55px #fff;left:802.20px;">Locais mais acessados</div>
<div class="t" style="top:588.70px;font-size:11px;line-height:11px;color:#aaaaaa;letter-spacing:0.043px;-webkit-text-stroke:0.15px #aaaaaa;left:802.00px;">Visualizações · 1 de jan. – 31 de mar. de 2025</div>
<div class="t" style="top:629.20px;font-size:11px;line-height:11px;color:#fff;letter-spacing:0.120px;-webkit-text-stroke:0.3px #fff;left:802.20px;">Brasil</div>
<div class="t" style="top:629.20px;font-size:11px;line-height:11px;color:#fff;letter-spacing:-0.400px;-webkit-text-stroke:0.3px #fff;right:326.20px;">89,9%</div>
<div class="r" style="left:1100.30px;top:631.20px;width:134.00px;height:7.00px;background:#bf6ff5;border-radius:3.5px;"></div>
<div class="t" style="top:663.80px;font-size:11px;line-height:11px;color:#fff;letter-spacing:0.120px;-webkit-text-stroke:0.3px #fff;left:802.20px;">Portugal</div>
<div class="t" style="top:663.80px;font-size:11px;line-height:11px;color:#fff;letter-spacing:-0.400px;-webkit-text-stroke:0.3px #fff;right:326.20px;">3,7%</div>
<div class="r" style="left:1226.50px;top:665.30px;width:8.00px;height:8.00px;background:#bf6ff5;border-radius:4px;"></div>
<div class="t" style="top:698.40px;font-size:11px;line-height:11px;color:#fff;letter-spacing:0.120px;-webkit-text-stroke:0.3px #fff;left:802.20px;">Japão</div>
<div class="t" style="top:698.40px;font-size:11px;line-height:11px;color:#fff;letter-spacing:-0.400px;-webkit-text-stroke:0.3px #fff;right:326.20px;">0,4%</div>
<div class="r" style="left:1226.50px;top:699.90px;width:8.00px;height:8.00px;background:#bf6ff5;border-radius:4px;"></div>
<div class="t" style="top:733.00px;font-size:11px;line-height:11px;color:#fff;letter-spacing:0.120px;-webkit-text-stroke:0.3px #fff;left:802.20px;">Estados Unidos</div>
<div class="t" style="top:733.00px;font-size:11px;line-height:11px;color:#fff;letter-spacing:-0.400px;-webkit-text-stroke:0.3px #fff;right:326.20px;">0,3%</div>
<div class="r" style="left:1226.50px;top:734.50px;width:8.00px;height:8.00px;background:#bf6ff5;border-radius:4px;"></div>
<div class="t" style="top:767.60px;font-size:11px;line-height:11px;color:#fff;letter-spacing:0.120px;-webkit-text-stroke:0.3px #fff;left:802.20px;">Canadá</div>
<div class="t" style="top:767.60px;font-size:11px;line-height:11px;color:#fff;letter-spacing:-0.400px;-webkit-text-stroke:0.3px #fff;right:326.20px;">0,2%</div>
<div class="r" style="left:1226.50px;top:769.10px;width:8.00px;height:8.00px;background:#bf6ff5;border-radius:4px;"></div>
<div class="r" style="left:802.00px;top:812.20px;width:75.00px;height:31.00px;background:#3d3d3d;border-radius:16px;"></div>
<div class="t" style="top:820.20px;font-size:13px;line-height:13px;color:#fff;letter-spacing:-0.396px;-webkit-text-stroke:0.55px #fff;left:816.00px;">Ver mais</div>
<div class="card" style="left:781px;top:886px;width:522px;height:217px"></div>
<div class="t" style="top:908.00px;font-size:15.5px;line-height:15.5px;color:#fff;letter-spacing:0.082px;-webkit-text-stroke:0.55px #fff;left:802.20px;">Principais idiomas de legendas/CC</div>
<svg class="r" style="left:1055px;top:908px" width="15" height="15" viewBox="0 0 15 15"><path d="M7.2 2.1L13.4 13.1H0.9z" fill="none" stroke="#fff" stroke-width="1.45" stroke-linejoin="round"/><path d="M7.2 6.1v3.6" stroke="#e0e0e0" stroke-width="1.2"/><circle cx="7.2" cy="11.3" r=".7" fill="#e0e0e0"/></svg>
<div class="t" style="top:930.60px;font-size:11px;line-height:11px;color:#aaaaaa;letter-spacing:0.043px;-webkit-text-stroke:0.15px #aaaaaa;left:802.00px;">Visualizações · 1 de jan. – 31 de mar. de 2025</div>
<div class="t" style="top:972.20px;font-size:11px;line-height:11px;color:#fff;letter-spacing:0.120px;-webkit-text-stroke:0.3px #fff;left:802.20px;">Sem legendas/CC</div>
<div class="t" style="top:972.20px;font-size:11px;line-height:11px;color:#fff;letter-spacing:-0.400px;-webkit-text-stroke:0.3px #fff;right:326.20px;">92,1%</div>
<div class="r" style="left:1100.30px;top:974.20px;width:134.00px;height:7.00px;background:#bf6ff5;border-radius:3.5px;"></div>
<div class="t" style="top:1006.80px;font-size:11px;line-height:11px;color:#fff;letter-spacing:0.120px;-webkit-text-stroke:0.3px #fff;left:802.20px;">português</div>
<div class="t" style="top:1006.80px;font-size:11px;line-height:11px;color:#fff;letter-spacing:-0.400px;-webkit-text-stroke:0.3px #fff;right:326.20px;">7,9%</div>
<div class="r" style="left:1222.90px;top:1008.80px;width:11.40px;height:7.00px;background:#bf6ff5;border-radius:3.5px;"></div>
<div class="r" style="left:802.00px;top:1050.40px;width:75.00px;height:31.00px;background:#3d3d3d;border-radius:16px;"></div>
<div class="t" style="top:1058.40px;font-size:13px;line-height:13px;color:#fff;letter-spacing:-0.396px;-webkit-text-stroke:0.55px #fff;left:816.00px;">Ver mais</div>
<div id="tabs"></div>
<div class="t" style="top:86.00px;font-size:13.5px;line-height:13.5px;color:#aaaaaa;letter-spacing:-0.279px;-webkit-text-stroke:0.35px #aaaaaa;left:244.90px;z-index:4">Visão geral</div>
<div class="t" style="top:86.00px;font-size:13.5px;line-height:13.5px;color:#aaaaaa;letter-spacing:-0.364px;-webkit-text-stroke:0.35px #aaaaaa;left:344.20px;z-index:4">Conteúdo</div>
<div class="t" style="top:86.00px;font-size:13.5px;line-height:13.5px;color:#fff;letter-spacing:-0.163px;-webkit-text-stroke:0.55px #fff;left:434.90px;z-index:4">Público</div>
<div class="t" style="top:86.00px;font-size:13.5px;line-height:13.5px;color:#aaaaaa;letter-spacing:-0.255px;-webkit-text-stroke:0.35px #aaaaaa;left:513.30px;z-index:4">Tendências</div>
<div class="r" style="left:434.80px;top:112.00px;width:43.40px;height:2.00px;background:#fff;border-radius:0px;z-index:4"></div>
<div class="t" style="top:66.90px;font-size:10.5px;line-height:10.5px;color:#aaaaaa;letter-spacing:-0.002px;-webkit-text-stroke:0.25px #aaaaaa;left:1104.00px;z-index:4">1 de jan. – 31 de mar. de 2025</div>
<div class="t" style="top:83.50px;font-size:13px;line-height:13px;color:#fff;letter-spacing:-0.032px;-webkit-text-stroke:0.12px #fff;left:1104.00px;z-index:4">Personalizado</div>
<svg class="r" style="left:1281px;top:77px;z-index:4" width="16" height="12" viewBox="0 0 16 12"><path d="M2 3.2l6 6 6-6" fill="none" stroke="#fff" stroke-width="1.8"/></svg>
<div class="r" style="left:879.00px;top:114.30px;width:2.20px;height:1.60px;background:#ddd;border-radius:1px;z-index:4"></div>
<div class="r" style="left:956.20px;top:114.30px;width:2.20px;height:1.60px;background:#ddd;border-radius:1px;z-index:4"></div>
</body></html>
